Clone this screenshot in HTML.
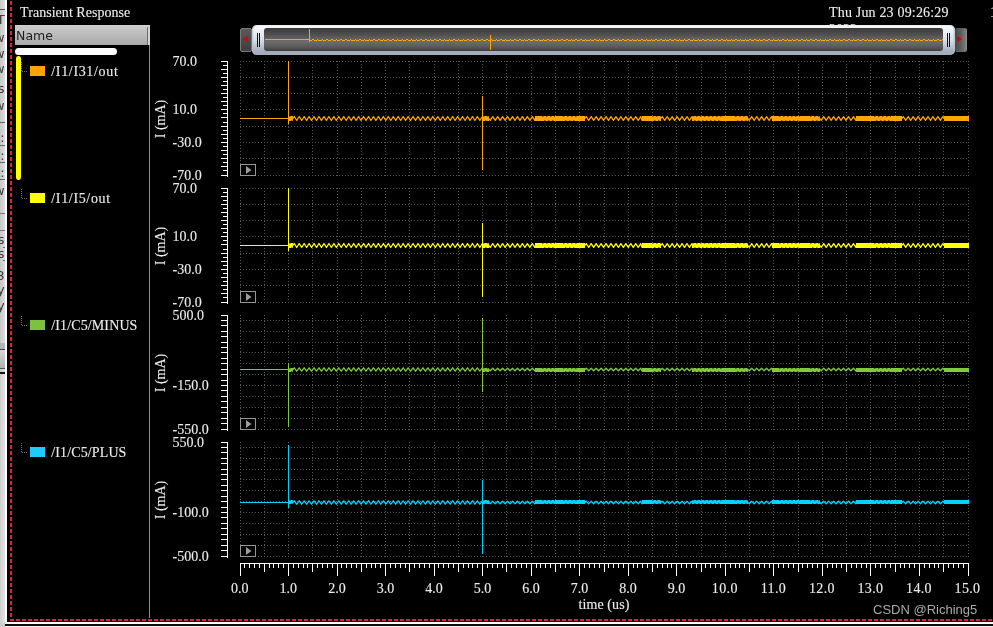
<!DOCTYPE html>
<html lang="en">
<head>
<meta charset="utf-8">
<title>Transient Response</title>
<style>
html,body{margin:0;padding:0;}
body{width:993px;height:627px;background:#000;position:relative;overflow:hidden;
 font-family:"Liberation Serif","DejaVu Serif",serif;font-size:14px;color:#ececec;-webkit-text-stroke:0.12px #ececec;}
div,span{position:absolute;white-space:nowrap;line-height:16px;}
#strip{left:0;top:0;width:4.8px;height:623px;background:linear-gradient(90deg,#c8c8c8,#dcdcdc);overflow:hidden;}
#stripw{left:4.8px;top:0;width:2.4px;height:622px;background:#fff;}
#strip span{-webkit-text-stroke:0;font-family:"DejaVu Sans","Liberation Sans",sans-serif;font-size:13px;color:#3c3c3c;right:0.2px;}
#strip i{position:absolute;left:0;width:5px;display:block;}
#bot1{left:4.6px;top:622px;width:990px;height:2.35px;background:#fff;}
#bot2{left:4.6px;top:624.35px;width:990px;height:1.5px;background:#0c0c0c;}
#bot3{left:4.6px;top:625.85px;width:990px;height:2px;background:#f6f6f6;}
#bot0{left:0;top:623px;width:4.8px;height:4px;background:#cbcbcb;}
#title{left:20.1px;top:5px;letter-spacing:0.04px;}
#date{left:829px;top:5px;letter-spacing:0.18px;}
#year{left:829px;top:22px;}
#one{left:989.9px;top:5px;}
#hdr{left:15px;top:25px;width:135px;height:20px;background:linear-gradient(#d4d4d4 0,#cbcbcb 6%,#a9a9a9 100%);}
#hdr b{position:absolute;left:132px;top:2px;width:1px;height:18px;background:#6e6e6e;}
#hdr u{position:absolute;left:133px;top:1px;width:2px;height:19px;background:#d2d2d2;}
#name{-webkit-text-stroke:0;left:16.1px;top:27.8px;transform:scaleY(0.92);transform-origin:0 12.5px;font-family:"DejaVu Sans","Liberation Sans",sans-serif;font-size:12.5px;color:#1e1e1e;line-height:16px;}
#pb{left:149px;top:45px;width:1px;height:573px;background:#8e8e8e;}
#wbar{left:15px;top:48px;width:102px;height:7px;border-radius:3.5px;background:#fff;}
#ybar{left:16.1px;top:56px;width:4.6px;height:124.4px;border-radius:2.3px / 3.2px;background:#ffff00;}
.sw{left:30px;width:15px;height:10px;}
.lg{left:51.3px;}
.yl{left:172.6px;}
.xl{width:40px;text-align:center;top:580.8px;margin-left:-0.7px;}
.ima{left:141px;width:40px;text-align:center;transform:rotate(-90deg);margin-top:-8px;}
#tl{left:574px;width:60px;text-align:center;top:596.5px;letter-spacing:0.1px;}
#wm{-webkit-text-stroke:0;left:873px;top:602px;font-family:"Liberation Sans","DejaVu Sans",sans-serif;font-size:13px;color:#a9a9a9;}
#sl{left:251.5px;top:25px;width:703.7px;height:30px;border-radius:5px;box-shadow:inset 1.5px 0 1.5px -0.5px #b9c1cd,inset -1.5px 0 1.5px -0.5px #b9c1cd;background:linear-gradient(#f8fafc 0,#f1f4f8 12%,#d9dfe7 50%,#a6b0be 86%,#a0aab8 100%);}
#sli{left:12.8px;top:3px;width:678.6px;height:23.3px;border-radius:3px;background:linear-gradient(#383838 0,#404040 8%,#4e4e4e 28%,#6d6d6d 58%,#5c5c5c 80%,#454545 96%,#363636 100%);}
.btn{top:28px;width:11.8px;height:23.9px;box-sizing:border-box;border:1px solid #7a7a7a;border-radius:2px;background:linear-gradient(#5a5a5a,#4c4c4c 45%,#3e3e3e);}
.grip{top:8px;width:1.1px;height:14px;background:#111;}
svg{position:absolute;left:0;top:0;}
#root{left:0;top:0;width:993px;height:627px;will-change:transform;}
</style>
</head>
<body>
<div id="root">
<div id="strip">
<i style="top:9px;height:1px;background:#555"></i>
<span style="top:12px">T</span><span style="top:29.5px">w</span><span style="top:45.5px">w</span><span style="top:60.5px">w</span><span style="top:80.5px">s</span><span style="top:97.5px">w</span>
<i style="top:122px;height:1px;background:#666"></i>
<span style="top:129.5px">:</span>
<i style="top:145px;height:1px;background:#666"></i>
<span style="top:147.5px">:</span>
<i style="top:162px;height:1px;background:#666"></i>
<span style="top:164.5px">:</span>
<i style="top:179px;height:1px;background:#666"></i>
<span style="top:182.5px">w</span>
<i style="top:213px;height:1px;background:#777"></i>
<i style="top:230px;height:1px;background:#777"></i>
<span style="top:231.5px">s</span>
<i style="top:247px;left:2.5px;height:1px;background:#666"></i>
<span style="top:245.5px">s</span>
<i style="top:260px;left:2.5px;height:1px;background:#666"></i>
<span style="top:267.5px">8</span><span style="top:282px">y</span><span style="top:298px">y</span>
<i style="top:343px;height:7px;background:#b4b4bc"></i>
<i style="top:349px;height:1px;background:#444"></i>
<i style="top:350px;height:18px;background:linear-gradient(#d8d8d8,#b0b0b0)"></i>
<i style="top:368px;height:1px;background:#555"></i>
<i style="top:372px;height:2px;background:#111"></i>
<i style="top:374px;height:249px;background:linear-gradient(90deg,#cfcfcf,#e2e2e2)"></i>
</div>
<div id="stripw"></div>
<div id="bot0"></div><div id="bot1"></div><div id="bot2"></div><div id="bot3"></div>

<div id="title">Transient Response</div>
<div id="date">Thu Jun 23 09:26:29</div>
<div id="year">2022</div>
<div id="one">1</div>

<div id="hdr"><b></b><u></u></div>
<div id="name">Name</div>
<div id="pb"></div>
<div id="wbar"></div>
<div id="ybar"></div>

<div class="sw" style="top:66px;background:#ffa500"></div>
<div class="lg" style="top:63.7px;letter-spacing:0.66px">/I1/I31/out</div>
<div class="sw" style="top:193px;background:#ffff00"></div>
<div class="lg" style="top:190.7px;letter-spacing:0.66px">/I1/I5/out</div>
<div class="sw" style="top:320px;background:#7dc13f"></div>
<div class="lg" style="top:317.7px;letter-spacing:0.12px">/I1/C5/MINUS</div>
<div class="sw" style="top:447px;background:#1ecbff"></div>
<div class="lg" style="top:444.7px;letter-spacing:0.12px">/I1/C5/PLUS</div>

<svg width="993" height="627" viewBox="0 0 993 627">
<!-- red dashed selection frame -->
<g shape-rendering="crispEdges" stroke="#e8193f" stroke-width="2" fill="none">
<line x1="11" y1="1" x2="11" y2="621" stroke-dasharray="4 2"/>
<line x1="10" y1="620" x2="993" y2="620" stroke-dasharray="4 2"/>
</g>
<!-- tree connectors -->
<g shape-rendering="crispEdges" stroke="#707070" stroke-width="1" stroke-dasharray="1 1" fill="none">
<path d="M21.5 62V71M22 71.5H28"/>
<path d="M21.5 189V198M22 198.5H28"/>
<path d="M21.5 316V325M22 325.5H28"/>
<path d="M21.5 443V452M22 452.5H28"/>
</g>
<g shape-rendering="crispEdges" stroke="#575b60" stroke-width="1" stroke-dasharray="1 2">
<line x1="240.5" y1="61" x2="240.5" y2="176"/>
<line x1="264.5" y1="61" x2="264.5" y2="176"/>
<line x1="288.5" y1="61" x2="288.5" y2="176"/>
<line x1="312.5" y1="61" x2="312.5" y2="176"/>
<line x1="337.5" y1="61" x2="337.5" y2="176"/>
<line x1="361.5" y1="61" x2="361.5" y2="176"/>
<line x1="385.5" y1="61" x2="385.5" y2="176"/>
<line x1="409.5" y1="61" x2="409.5" y2="176"/>
<line x1="434.5" y1="61" x2="434.5" y2="176"/>
<line x1="458.5" y1="61" x2="458.5" y2="176"/>
<line x1="482.5" y1="61" x2="482.5" y2="176"/>
<line x1="506.5" y1="61" x2="506.5" y2="176"/>
<line x1="531.5" y1="61" x2="531.5" y2="176"/>
<line x1="555.5" y1="61" x2="555.5" y2="176"/>
<line x1="579.5" y1="61" x2="579.5" y2="176"/>
<line x1="604.5" y1="61" x2="604.5" y2="176"/>
<line x1="628.5" y1="61" x2="628.5" y2="176"/>
<line x1="652.5" y1="61" x2="652.5" y2="176"/>
<line x1="676.5" y1="61" x2="676.5" y2="176"/>
<line x1="701.5" y1="61" x2="701.5" y2="176"/>
<line x1="725.5" y1="61" x2="725.5" y2="176"/>
<line x1="749.5" y1="61" x2="749.5" y2="176"/>
<line x1="773.5" y1="61" x2="773.5" y2="176"/>
<line x1="798.5" y1="61" x2="798.5" y2="176"/>
<line x1="822.5" y1="61" x2="822.5" y2="176"/>
<line x1="846.5" y1="61" x2="846.5" y2="176"/>
<line x1="870.5" y1="61" x2="870.5" y2="176"/>
<line x1="895.5" y1="61" x2="895.5" y2="176"/>
<line x1="919.5" y1="61" x2="919.5" y2="176"/>
<line x1="943.5" y1="61" x2="943.5" y2="176"/>
<line x1="968.5" y1="61" x2="968.5" y2="176"/>
<line x1="240" y1="61.5" x2="969" y2="61.5"/>
<line x1="240" y1="77.5" x2="969" y2="77.5"/>
<line x1="240" y1="93.5" x2="969" y2="93.5"/>
<line x1="240" y1="109.5" x2="969" y2="109.5"/>
<line x1="240" y1="126.5" x2="969" y2="126.5"/>
<line x1="240" y1="142.5" x2="969" y2="142.5"/>
<line x1="240" y1="158.5" x2="969" y2="158.5"/>
<line x1="240" y1="175.5" x2="969" y2="175.5"/>
</g>
<g shape-rendering="crispEdges" stroke="#575b60" stroke-width="1" stroke-dasharray="1 2">
<line x1="240.5" y1="188" x2="240.5" y2="303"/>
<line x1="264.5" y1="188" x2="264.5" y2="303"/>
<line x1="288.5" y1="188" x2="288.5" y2="303"/>
<line x1="312.5" y1="188" x2="312.5" y2="303"/>
<line x1="337.5" y1="188" x2="337.5" y2="303"/>
<line x1="361.5" y1="188" x2="361.5" y2="303"/>
<line x1="385.5" y1="188" x2="385.5" y2="303"/>
<line x1="409.5" y1="188" x2="409.5" y2="303"/>
<line x1="434.5" y1="188" x2="434.5" y2="303"/>
<line x1="458.5" y1="188" x2="458.5" y2="303"/>
<line x1="482.5" y1="188" x2="482.5" y2="303"/>
<line x1="506.5" y1="188" x2="506.5" y2="303"/>
<line x1="531.5" y1="188" x2="531.5" y2="303"/>
<line x1="555.5" y1="188" x2="555.5" y2="303"/>
<line x1="579.5" y1="188" x2="579.5" y2="303"/>
<line x1="604.5" y1="188" x2="604.5" y2="303"/>
<line x1="628.5" y1="188" x2="628.5" y2="303"/>
<line x1="652.5" y1="188" x2="652.5" y2="303"/>
<line x1="676.5" y1="188" x2="676.5" y2="303"/>
<line x1="701.5" y1="188" x2="701.5" y2="303"/>
<line x1="725.5" y1="188" x2="725.5" y2="303"/>
<line x1="749.5" y1="188" x2="749.5" y2="303"/>
<line x1="773.5" y1="188" x2="773.5" y2="303"/>
<line x1="798.5" y1="188" x2="798.5" y2="303"/>
<line x1="822.5" y1="188" x2="822.5" y2="303"/>
<line x1="846.5" y1="188" x2="846.5" y2="303"/>
<line x1="870.5" y1="188" x2="870.5" y2="303"/>
<line x1="895.5" y1="188" x2="895.5" y2="303"/>
<line x1="919.5" y1="188" x2="919.5" y2="303"/>
<line x1="943.5" y1="188" x2="943.5" y2="303"/>
<line x1="968.5" y1="188" x2="968.5" y2="303"/>
<line x1="240" y1="188.5" x2="969" y2="188.5"/>
<line x1="240" y1="204.5" x2="969" y2="204.5"/>
<line x1="240" y1="220.5" x2="969" y2="220.5"/>
<line x1="240" y1="236.5" x2="969" y2="236.5"/>
<line x1="240" y1="253.5" x2="969" y2="253.5"/>
<line x1="240" y1="269.5" x2="969" y2="269.5"/>
<line x1="240" y1="285.5" x2="969" y2="285.5"/>
<line x1="240" y1="302.5" x2="969" y2="302.5"/>
</g>
<g shape-rendering="crispEdges" stroke="#575b60" stroke-width="1" stroke-dasharray="1 2">
<line x1="240.5" y1="315" x2="240.5" y2="430"/>
<line x1="264.5" y1="315" x2="264.5" y2="430"/>
<line x1="288.5" y1="315" x2="288.5" y2="430"/>
<line x1="312.5" y1="315" x2="312.5" y2="430"/>
<line x1="337.5" y1="315" x2="337.5" y2="430"/>
<line x1="361.5" y1="315" x2="361.5" y2="430"/>
<line x1="385.5" y1="315" x2="385.5" y2="430"/>
<line x1="409.5" y1="315" x2="409.5" y2="430"/>
<line x1="434.5" y1="315" x2="434.5" y2="430"/>
<line x1="458.5" y1="315" x2="458.5" y2="430"/>
<line x1="482.5" y1="315" x2="482.5" y2="430"/>
<line x1="506.5" y1="315" x2="506.5" y2="430"/>
<line x1="531.5" y1="315" x2="531.5" y2="430"/>
<line x1="555.5" y1="315" x2="555.5" y2="430"/>
<line x1="579.5" y1="315" x2="579.5" y2="430"/>
<line x1="604.5" y1="315" x2="604.5" y2="430"/>
<line x1="628.5" y1="315" x2="628.5" y2="430"/>
<line x1="652.5" y1="315" x2="652.5" y2="430"/>
<line x1="676.5" y1="315" x2="676.5" y2="430"/>
<line x1="701.5" y1="315" x2="701.5" y2="430"/>
<line x1="725.5" y1="315" x2="725.5" y2="430"/>
<line x1="749.5" y1="315" x2="749.5" y2="430"/>
<line x1="773.5" y1="315" x2="773.5" y2="430"/>
<line x1="798.5" y1="315" x2="798.5" y2="430"/>
<line x1="822.5" y1="315" x2="822.5" y2="430"/>
<line x1="846.5" y1="315" x2="846.5" y2="430"/>
<line x1="870.5" y1="315" x2="870.5" y2="430"/>
<line x1="895.5" y1="315" x2="895.5" y2="430"/>
<line x1="919.5" y1="315" x2="919.5" y2="430"/>
<line x1="943.5" y1="315" x2="943.5" y2="430"/>
<line x1="968.5" y1="315" x2="968.5" y2="430"/>
<line x1="240" y1="320.5" x2="969" y2="320.5"/>
<line x1="240" y1="331.5" x2="969" y2="331.5"/>
<line x1="240" y1="342.5" x2="969" y2="342.5"/>
<line x1="240" y1="352.5" x2="969" y2="352.5"/>
<line x1="240" y1="363.5" x2="969" y2="363.5"/>
<line x1="240" y1="374.5" x2="969" y2="374.5"/>
<line x1="240" y1="385.5" x2="969" y2="385.5"/>
<line x1="240" y1="396.5" x2="969" y2="396.5"/>
<line x1="240" y1="407.5" x2="969" y2="407.5"/>
<line x1="240" y1="418.5" x2="969" y2="418.5"/>
<line x1="240" y1="429.5" x2="969" y2="429.5"/>
</g>
<g shape-rendering="crispEdges" stroke="#575b60" stroke-width="1" stroke-dasharray="1 2">
<line x1="240.5" y1="442" x2="240.5" y2="557"/>
<line x1="264.5" y1="442" x2="264.5" y2="557"/>
<line x1="288.5" y1="442" x2="288.5" y2="557"/>
<line x1="312.5" y1="442" x2="312.5" y2="557"/>
<line x1="337.5" y1="442" x2="337.5" y2="557"/>
<line x1="361.5" y1="442" x2="361.5" y2="557"/>
<line x1="385.5" y1="442" x2="385.5" y2="557"/>
<line x1="409.5" y1="442" x2="409.5" y2="557"/>
<line x1="434.5" y1="442" x2="434.5" y2="557"/>
<line x1="458.5" y1="442" x2="458.5" y2="557"/>
<line x1="482.5" y1="442" x2="482.5" y2="557"/>
<line x1="506.5" y1="442" x2="506.5" y2="557"/>
<line x1="531.5" y1="442" x2="531.5" y2="557"/>
<line x1="555.5" y1="442" x2="555.5" y2="557"/>
<line x1="579.5" y1="442" x2="579.5" y2="557"/>
<line x1="604.5" y1="442" x2="604.5" y2="557"/>
<line x1="628.5" y1="442" x2="628.5" y2="557"/>
<line x1="652.5" y1="442" x2="652.5" y2="557"/>
<line x1="676.5" y1="442" x2="676.5" y2="557"/>
<line x1="701.5" y1="442" x2="701.5" y2="557"/>
<line x1="725.5" y1="442" x2="725.5" y2="557"/>
<line x1="749.5" y1="442" x2="749.5" y2="557"/>
<line x1="773.5" y1="442" x2="773.5" y2="557"/>
<line x1="798.5" y1="442" x2="798.5" y2="557"/>
<line x1="822.5" y1="442" x2="822.5" y2="557"/>
<line x1="846.5" y1="442" x2="846.5" y2="557"/>
<line x1="870.5" y1="442" x2="870.5" y2="557"/>
<line x1="895.5" y1="442" x2="895.5" y2="557"/>
<line x1="919.5" y1="442" x2="919.5" y2="557"/>
<line x1="943.5" y1="442" x2="943.5" y2="557"/>
<line x1="968.5" y1="442" x2="968.5" y2="557"/>
<line x1="240" y1="447.5" x2="969" y2="447.5"/>
<line x1="240" y1="458.5" x2="969" y2="458.5"/>
<line x1="240" y1="469.5" x2="969" y2="469.5"/>
<line x1="240" y1="479.5" x2="969" y2="479.5"/>
<line x1="240" y1="490.5" x2="969" y2="490.5"/>
<line x1="240" y1="501.5" x2="969" y2="501.5"/>
<line x1="240" y1="512.5" x2="969" y2="512.5"/>
<line x1="240" y1="523.5" x2="969" y2="523.5"/>
<line x1="240" y1="534.5" x2="969" y2="534.5"/>
<line x1="240" y1="545.5" x2="969" y2="545.5"/>
<line x1="240" y1="556.5" x2="969" y2="556.5"/>
</g>
<g shape-rendering="crispEdges" fill="#fff">
<rect x="227" y="61" width="1" height="116"/>
<rect x="221" y="61" width="6" height="1"/>
<rect x="223" y="65" width="4" height="1"/>
<rect x="221" y="69" width="6" height="1"/>
<rect x="223" y="73" width="4" height="1"/>
<rect x="221" y="77" width="6" height="1"/>
<rect x="223" y="81" width="4" height="1"/>
<rect x="221" y="85" width="6" height="1"/>
<rect x="223" y="89" width="4" height="1"/>
<rect x="221" y="93" width="6" height="1"/>
<rect x="223" y="97" width="4" height="1"/>
<rect x="221" y="101" width="6" height="1"/>
<rect x="223" y="105" width="4" height="1"/>
<rect x="221" y="109" width="6" height="1"/>
<rect x="223" y="113" width="4" height="1"/>
<rect x="221" y="117" width="6" height="1"/>
<rect x="223" y="122" width="4" height="1"/>
<rect x="221" y="126" width="6" height="1"/>
<rect x="223" y="130" width="4" height="1"/>
<rect x="221" y="134" width="6" height="1"/>
<rect x="223" y="138" width="4" height="1"/>
<rect x="221" y="142" width="6" height="1"/>
<rect x="223" y="146" width="4" height="1"/>
<rect x="221" y="150" width="6" height="1"/>
<rect x="223" y="154" width="4" height="1"/>
<rect x="221" y="158" width="6" height="1"/>
<rect x="223" y="162" width="4" height="1"/>
<rect x="221" y="166" width="6" height="1"/>
<rect x="223" y="170" width="4" height="1"/>
<rect x="221" y="175" width="6" height="1"/>
</g>
<g shape-rendering="crispEdges" fill="#fff">
<rect x="227" y="188" width="1" height="116"/>
<rect x="221" y="188" width="6" height="1"/>
<rect x="223" y="192" width="4" height="1"/>
<rect x="221" y="196" width="6" height="1"/>
<rect x="223" y="200" width="4" height="1"/>
<rect x="221" y="204" width="6" height="1"/>
<rect x="223" y="208" width="4" height="1"/>
<rect x="221" y="212" width="6" height="1"/>
<rect x="223" y="216" width="4" height="1"/>
<rect x="221" y="220" width="6" height="1"/>
<rect x="223" y="224" width="4" height="1"/>
<rect x="221" y="228" width="6" height="1"/>
<rect x="223" y="232" width="4" height="1"/>
<rect x="221" y="236" width="6" height="1"/>
<rect x="223" y="240" width="4" height="1"/>
<rect x="221" y="244" width="6" height="1"/>
<rect x="223" y="249" width="4" height="1"/>
<rect x="221" y="253" width="6" height="1"/>
<rect x="223" y="257" width="4" height="1"/>
<rect x="221" y="261" width="6" height="1"/>
<rect x="223" y="265" width="4" height="1"/>
<rect x="221" y="269" width="6" height="1"/>
<rect x="223" y="273" width="4" height="1"/>
<rect x="221" y="277" width="6" height="1"/>
<rect x="223" y="281" width="4" height="1"/>
<rect x="221" y="285" width="6" height="1"/>
<rect x="223" y="289" width="4" height="1"/>
<rect x="221" y="293" width="6" height="1"/>
<rect x="223" y="297" width="4" height="1"/>
<rect x="221" y="302" width="6" height="1"/>
</g>
<g shape-rendering="crispEdges" fill="#fff">
<rect x="227" y="315" width="1" height="116"/>
<rect x="221" y="315" width="6" height="1"/>
<rect x="221" y="320" width="6" height="1"/>
<rect x="221" y="325" width="6" height="1"/>
<rect x="221" y="331" width="6" height="1"/>
<rect x="221" y="336" width="6" height="1"/>
<rect x="221" y="342" width="6" height="1"/>
<rect x="221" y="347" width="6" height="1"/>
<rect x="221" y="352" width="6" height="1"/>
<rect x="221" y="358" width="6" height="1"/>
<rect x="221" y="363" width="6" height="1"/>
<rect x="221" y="369" width="6" height="1"/>
<rect x="221" y="374" width="6" height="1"/>
<rect x="221" y="380" width="6" height="1"/>
<rect x="221" y="385" width="6" height="1"/>
<rect x="221" y="390" width="6" height="1"/>
<rect x="221" y="396" width="6" height="1"/>
<rect x="221" y="401" width="6" height="1"/>
<rect x="221" y="407" width="6" height="1"/>
<rect x="221" y="412" width="6" height="1"/>
<rect x="221" y="418" width="6" height="1"/>
<rect x="221" y="423" width="6" height="1"/>
<rect x="221" y="429" width="6" height="1"/>
</g>
<g shape-rendering="crispEdges" fill="#fff">
<rect x="227" y="442" width="1" height="116"/>
<rect x="221" y="442" width="6" height="1"/>
<rect x="221" y="447" width="6" height="1"/>
<rect x="221" y="452" width="6" height="1"/>
<rect x="221" y="458" width="6" height="1"/>
<rect x="221" y="463" width="6" height="1"/>
<rect x="221" y="469" width="6" height="1"/>
<rect x="221" y="474" width="6" height="1"/>
<rect x="221" y="479" width="6" height="1"/>
<rect x="221" y="485" width="6" height="1"/>
<rect x="221" y="490" width="6" height="1"/>
<rect x="221" y="496" width="6" height="1"/>
<rect x="221" y="501" width="6" height="1"/>
<rect x="221" y="507" width="6" height="1"/>
<rect x="221" y="512" width="6" height="1"/>
<rect x="221" y="517" width="6" height="1"/>
<rect x="221" y="523" width="6" height="1"/>
<rect x="221" y="528" width="6" height="1"/>
<rect x="221" y="534" width="6" height="1"/>
<rect x="221" y="539" width="6" height="1"/>
<rect x="221" y="545" width="6" height="1"/>
<rect x="221" y="550" width="6" height="1"/>
<rect x="221" y="556" width="6" height="1"/>
</g>
<g shape-rendering="crispEdges" fill="#fff">
<rect x="240" y="563" width="729" height="1"/>
<rect x="240" y="563" width="1" height="13"/>
<rect x="244" y="563" width="1" height="5"/>
<rect x="249" y="563" width="1" height="5"/>
<rect x="254" y="563" width="1" height="5"/>
<rect x="259" y="563" width="1" height="5"/>
<rect x="264" y="563" width="1" height="9"/>
<rect x="269" y="563" width="1" height="5"/>
<rect x="273" y="563" width="1" height="5"/>
<rect x="278" y="563" width="1" height="5"/>
<rect x="283" y="563" width="1" height="5"/>
<rect x="288" y="563" width="1" height="13"/>
<rect x="293" y="563" width="1" height="5"/>
<rect x="298" y="563" width="1" height="5"/>
<rect x="303" y="563" width="1" height="5"/>
<rect x="307" y="563" width="1" height="5"/>
<rect x="312" y="563" width="1" height="9"/>
<rect x="317" y="563" width="1" height="5"/>
<rect x="322" y="563" width="1" height="5"/>
<rect x="327" y="563" width="1" height="5"/>
<rect x="332" y="563" width="1" height="5"/>
<rect x="337" y="563" width="1" height="13"/>
<rect x="341" y="563" width="1" height="5"/>
<rect x="346" y="563" width="1" height="5"/>
<rect x="351" y="563" width="1" height="5"/>
<rect x="356" y="563" width="1" height="5"/>
<rect x="361" y="563" width="1" height="9"/>
<rect x="366" y="563" width="1" height="5"/>
<rect x="371" y="563" width="1" height="5"/>
<rect x="375" y="563" width="1" height="5"/>
<rect x="380" y="563" width="1" height="5"/>
<rect x="385" y="563" width="1" height="13"/>
<rect x="390" y="563" width="1" height="5"/>
<rect x="395" y="563" width="1" height="5"/>
<rect x="400" y="563" width="1" height="5"/>
<rect x="405" y="563" width="1" height="5"/>
<rect x="409" y="563" width="1" height="9"/>
<rect x="414" y="563" width="1" height="5"/>
<rect x="419" y="563" width="1" height="5"/>
<rect x="424" y="563" width="1" height="5"/>
<rect x="429" y="563" width="1" height="5"/>
<rect x="434" y="563" width="1" height="13"/>
<rect x="438" y="563" width="1" height="5"/>
<rect x="443" y="563" width="1" height="5"/>
<rect x="448" y="563" width="1" height="5"/>
<rect x="453" y="563" width="1" height="5"/>
<rect x="458" y="563" width="1" height="9"/>
<rect x="463" y="563" width="1" height="5"/>
<rect x="468" y="563" width="1" height="5"/>
<rect x="472" y="563" width="1" height="5"/>
<rect x="477" y="563" width="1" height="5"/>
<rect x="482" y="563" width="1" height="13"/>
<rect x="487" y="563" width="1" height="5"/>
<rect x="492" y="563" width="1" height="5"/>
<rect x="497" y="563" width="1" height="5"/>
<rect x="502" y="563" width="1" height="5"/>
<rect x="506" y="563" width="1" height="9"/>
<rect x="511" y="563" width="1" height="5"/>
<rect x="516" y="563" width="1" height="5"/>
<rect x="521" y="563" width="1" height="5"/>
<rect x="526" y="563" width="1" height="5"/>
<rect x="531" y="563" width="1" height="13"/>
<rect x="536" y="563" width="1" height="5"/>
<rect x="540" y="563" width="1" height="5"/>
<rect x="545" y="563" width="1" height="5"/>
<rect x="550" y="563" width="1" height="5"/>
<rect x="555" y="563" width="1" height="9"/>
<rect x="560" y="563" width="1" height="5"/>
<rect x="565" y="563" width="1" height="5"/>
<rect x="570" y="563" width="1" height="5"/>
<rect x="574" y="563" width="1" height="5"/>
<rect x="579" y="563" width="1" height="13"/>
<rect x="584" y="563" width="1" height="5"/>
<rect x="589" y="563" width="1" height="5"/>
<rect x="594" y="563" width="1" height="5"/>
<rect x="599" y="563" width="1" height="5"/>
<rect x="604" y="563" width="1" height="9"/>
<rect x="608" y="563" width="1" height="5"/>
<rect x="613" y="563" width="1" height="5"/>
<rect x="618" y="563" width="1" height="5"/>
<rect x="623" y="563" width="1" height="5"/>
<rect x="628" y="563" width="1" height="13"/>
<rect x="633" y="563" width="1" height="5"/>
<rect x="637" y="563" width="1" height="5"/>
<rect x="642" y="563" width="1" height="5"/>
<rect x="647" y="563" width="1" height="5"/>
<rect x="652" y="563" width="1" height="9"/>
<rect x="657" y="563" width="1" height="5"/>
<rect x="662" y="563" width="1" height="5"/>
<rect x="667" y="563" width="1" height="5"/>
<rect x="671" y="563" width="1" height="5"/>
<rect x="676" y="563" width="1" height="13"/>
<rect x="681" y="563" width="1" height="5"/>
<rect x="686" y="563" width="1" height="5"/>
<rect x="691" y="563" width="1" height="5"/>
<rect x="696" y="563" width="1" height="5"/>
<rect x="701" y="563" width="1" height="9"/>
<rect x="705" y="563" width="1" height="5"/>
<rect x="710" y="563" width="1" height="5"/>
<rect x="715" y="563" width="1" height="5"/>
<rect x="720" y="563" width="1" height="5"/>
<rect x="725" y="563" width="1" height="13"/>
<rect x="730" y="563" width="1" height="5"/>
<rect x="735" y="563" width="1" height="5"/>
<rect x="739" y="563" width="1" height="5"/>
<rect x="744" y="563" width="1" height="5"/>
<rect x="749" y="563" width="1" height="9"/>
<rect x="754" y="563" width="1" height="5"/>
<rect x="759" y="563" width="1" height="5"/>
<rect x="764" y="563" width="1" height="5"/>
<rect x="769" y="563" width="1" height="5"/>
<rect x="773" y="563" width="1" height="13"/>
<rect x="778" y="563" width="1" height="5"/>
<rect x="783" y="563" width="1" height="5"/>
<rect x="788" y="563" width="1" height="5"/>
<rect x="793" y="563" width="1" height="5"/>
<rect x="798" y="563" width="1" height="9"/>
<rect x="802" y="563" width="1" height="5"/>
<rect x="807" y="563" width="1" height="5"/>
<rect x="812" y="563" width="1" height="5"/>
<rect x="817" y="563" width="1" height="5"/>
<rect x="822" y="563" width="1" height="13"/>
<rect x="827" y="563" width="1" height="5"/>
<rect x="832" y="563" width="1" height="5"/>
<rect x="836" y="563" width="1" height="5"/>
<rect x="841" y="563" width="1" height="5"/>
<rect x="846" y="563" width="1" height="9"/>
<rect x="851" y="563" width="1" height="5"/>
<rect x="856" y="563" width="1" height="5"/>
<rect x="861" y="563" width="1" height="5"/>
<rect x="866" y="563" width="1" height="5"/>
<rect x="870" y="563" width="1" height="13"/>
<rect x="875" y="563" width="1" height="5"/>
<rect x="880" y="563" width="1" height="5"/>
<rect x="885" y="563" width="1" height="5"/>
<rect x="890" y="563" width="1" height="5"/>
<rect x="895" y="563" width="1" height="9"/>
<rect x="900" y="563" width="1" height="5"/>
<rect x="904" y="563" width="1" height="5"/>
<rect x="909" y="563" width="1" height="5"/>
<rect x="914" y="563" width="1" height="5"/>
<rect x="919" y="563" width="1" height="13"/>
<rect x="924" y="563" width="1" height="5"/>
<rect x="929" y="563" width="1" height="5"/>
<rect x="934" y="563" width="1" height="5"/>
<rect x="938" y="563" width="1" height="5"/>
<rect x="943" y="563" width="1" height="9"/>
<rect x="948" y="563" width="1" height="5"/>
<rect x="953" y="563" width="1" height="5"/>
<rect x="958" y="563" width="1" height="5"/>
<rect x="963" y="563" width="1" height="5"/>
<rect x="968" y="563" width="1" height="13"/>
</g>
<g shape-rendering="crispEdges" fill="#ffa500">
<rect x="240" y="118" width="49" height="1"/>
<rect x="288" y="61" width="1" height="63"/>
<rect x="482" y="96" width="1" height="74"/>
<rect x="535" y="116.0" width="7" height="5.0"/>
<rect x="555" y="116.0" width="8" height="5.0"/>
<rect x="577" y="116.0" width="8" height="5.0"/>
<rect x="642" y="116.0" width="10" height="5.0"/>
<rect x="722" y="116.0" width="13" height="5.0"/>
<rect x="772" y="116.0" width="7" height="5.0"/>
<rect x="800" y="116.0" width="10" height="5.0"/>
<rect x="856" y="116.0" width="18" height="5.0"/>
<rect x="891" y="116.0" width="11" height="5.0"/>
<rect x="944" y="116.0" width="25" height="5.0"/>
</g>
<path d="M289.00 116.00 L289.30 116.00 L289.90 117.30 L290.50 116.00 L291.00 116.00 L291.00 116.00 L293.00 116.00 L293.00 121.00 L292.50 121.00 L291.90 119.70 L291.30 121.00 L291.00 121.00 L291.00 121.00 L289.00 121.00Z" fill="#ffa500"/>
<path d="M293.00 118.50 L294.24 116.50 L296.71 120.50 L299.19 116.50 L301.66 120.50 L304.14 116.50 L306.61 120.50 L309.09 116.50 L311.56 120.50 L314.04 116.50 L316.51 120.50 L318.99 116.50 L321.46 120.50 L323.94 116.50 L326.41 120.50 L328.89 116.50 L331.36 120.50 L333.84 116.50 L336.31 120.50 L338.79 116.50 L341.26 120.50 L343.74 116.50 L346.21 120.50 L348.69 116.50 L351.16 120.50 L353.64 116.50 L356.11 120.50 L358.59 116.50 L361.06 120.50 L363.54 116.50 L366.01 120.50 L368.49 116.50 L370.96 120.50 L373.44 116.50 L375.91 120.50 L378.39 116.50 L380.86 120.50 L383.34 116.50 L385.81 120.50 L388.29 116.50 L390.76 120.50 L393.24 116.50 L395.71 120.50 L398.19 116.50 L400.66 120.50 L403.14 116.50 L405.61 120.50 L408.09 116.50 L410.56 120.50 L413.04 116.50 L415.51 120.50 L417.99 116.50 L420.46 120.50 L422.94 116.50 L425.41 120.50 L427.89 116.50 L430.36 120.50 L432.84 116.50 L435.31 120.50 L437.79 116.50 L440.26 120.50 L442.74 116.50 L445.21 120.50 L447.69 116.50 L450.16 120.50 L452.64 116.50 L455.11 120.50 L457.59 116.50 L460.06 120.50 L462.54 116.50 L465.01 120.50 L467.49 116.50 L469.96 120.50 L472.44 116.50 L474.91 120.50 L477.39 116.50 L479.86 120.50 L482.34 116.50 L483.00 118.50" fill="none" stroke="#ffa500" stroke-width="1.3" stroke-linejoin="round"/>
<path d="M483.00 116.00 L483.30 116.00 L483.90 117.30 L484.50 116.00 L485.00 116.00 L485.00 116.00 L487.00 116.00 L487.00 116.00 L487.30 116.00 L487.90 117.30 L488.50 116.00 L489.00 116.00 L489.00 121.00 L487.00 121.00 L487.00 121.00 L486.50 121.00 L485.90 119.70 L485.30 121.00 L485.00 121.00 L485.00 121.00 L483.00 121.00Z" fill="#ffa500"/>
<path d="M489.00 118.50 L490.24 120.35 L492.71 116.65 L495.19 120.35 L497.66 116.65 L500.14 120.35 L502.61 116.65 L505.09 120.35 L507.56 116.65 L510.04 120.35 L512.51 116.65 L514.99 120.35 L517.46 116.65 L519.94 120.35 L522.41 116.65 L524.89 120.35 L527.36 116.65 L529.84 120.35 L532.31 116.65 L534.79 120.35 L535.00 118.50" fill="none" stroke="#ffa500" stroke-width="1.3" stroke-linejoin="round"/>
<path d="M542.00 116.00 L542.30 116.00 L542.90 117.30 L543.50 116.00 L544.00 116.00 L544.00 116.00 L546.00 116.00 L546.00 116.00 L546.30 116.00 L546.90 117.30 L547.50 116.00 L548.00 116.00 L548.00 116.00 L550.00 116.00 L550.00 116.00 L550.30 116.00 L550.90 117.30 L551.50 116.00 L552.00 116.00 L552.00 116.00 L554.00 116.00 L554.00 116.00 L554.30 116.00 L554.90 117.30 L555.00 116.00 L555.00 116.00 L555.00 121.00 L554.00 121.00 L554.00 121.00 L553.50 121.00 L552.90 119.70 L552.30 121.00 L552.00 121.00 L552.00 121.00 L550.00 121.00 L550.00 121.00 L549.50 121.00 L548.90 119.70 L548.30 121.00 L548.00 121.00 L548.00 121.00 L546.00 121.00 L546.00 121.00 L545.50 121.00 L544.90 119.70 L544.30 121.00 L544.00 121.00 L544.00 121.00 L542.00 121.00Z" fill="#ffa500"/>
<path d="M563.00 116.00 L563.30 116.00 L563.90 117.30 L564.50 116.00 L565.00 116.00 L565.00 116.00 L567.00 116.00 L567.00 116.00 L567.30 116.00 L567.90 117.30 L568.50 116.00 L569.00 116.00 L569.00 116.00 L571.00 116.00 L571.00 116.00 L571.30 116.00 L571.90 117.30 L572.50 116.00 L573.00 116.00 L573.00 116.00 L575.00 116.00 L575.00 116.00 L575.30 116.00 L575.90 117.30 L576.50 116.00 L577.00 116.00 L577.00 121.00 L575.00 121.00 L575.00 121.00 L574.50 121.00 L573.90 119.70 L573.30 121.00 L573.00 121.00 L573.00 121.00 L571.00 121.00 L571.00 121.00 L570.50 121.00 L569.90 119.70 L569.30 121.00 L569.00 121.00 L569.00 121.00 L567.00 121.00 L567.00 121.00 L566.50 121.00 L565.90 119.70 L565.30 121.00 L565.00 121.00 L565.00 121.00 L563.00 121.00Z" fill="#ffa500"/>
<path d="M585.00 118.50 L586.24 116.65 L588.71 120.35 L591.19 116.65 L593.66 120.35 L596.14 116.65 L598.61 120.35 L601.09 116.65 L603.56 120.35 L606.04 116.65 L608.51 120.35 L610.99 116.65 L613.46 120.35 L615.94 116.65 L618.41 120.35 L620.89 116.65 L623.36 120.35 L625.84 116.65 L628.31 120.35 L630.79 116.65 L633.26 120.35 L635.74 116.65 L638.21 120.35 L640.69 116.65 L642.00 120.35 L642.00 118.50" fill="none" stroke="#ffa500" stroke-width="1.3" stroke-linejoin="round"/>
<path d="M652.00 116.00 L652.30 116.00 L652.90 117.30 L653.50 116.00 L654.00 116.00 L654.00 116.00 L656.00 116.00 L656.00 116.00 L656.30 116.00 L656.90 117.30 L657.50 116.00 L658.00 116.00 L658.00 116.00 L660.00 116.00 L660.00 116.00 L660.30 116.00 L660.90 117.30 L661.00 116.00 L661.00 116.00 L661.00 121.00 L660.00 121.00 L660.00 121.00 L659.50 121.00 L658.90 119.70 L658.30 121.00 L658.00 121.00 L658.00 121.00 L656.00 121.00 L656.00 121.00 L655.50 121.00 L654.90 119.70 L654.30 121.00 L654.00 121.00 L654.00 121.00 L652.00 121.00Z" fill="#ffa500"/>
<path d="M661.00 118.50 L662.24 116.65 L664.71 120.35 L667.19 116.65 L669.66 120.35 L672.14 116.65 L674.61 120.35 L677.09 116.65 L679.56 120.35 L682.04 116.65 L684.51 120.35 L686.99 116.65 L689.46 120.35 L691.94 116.65 L692.00 118.50" fill="none" stroke="#ffa500" stroke-width="1.3" stroke-linejoin="round"/>
<path d="M692.00 116.00 L692.30 116.00 L692.90 117.30 L693.50 116.00 L694.00 116.00 L694.00 116.00 L696.00 116.00 L696.00 116.00 L696.30 116.00 L696.90 117.30 L697.50 116.00 L698.00 116.00 L698.00 116.00 L700.00 116.00 L700.00 116.00 L700.30 116.00 L700.90 117.30 L701.50 116.00 L702.00 116.00 L702.00 116.00 L704.00 116.00 L704.00 116.00 L704.30 116.00 L704.90 117.30 L705.50 116.00 L706.00 116.00 L706.00 116.00 L708.00 116.00 L708.00 116.00 L708.30 116.00 L708.90 117.30 L709.50 116.00 L710.00 116.00 L710.00 116.00 L712.00 116.00 L712.00 116.00 L712.30 116.00 L712.90 117.30 L713.50 116.00 L714.00 116.00 L714.00 116.00 L716.00 116.00 L716.00 116.00 L716.30 116.00 L716.90 117.30 L717.50 116.00 L718.00 116.00 L718.00 116.00 L720.00 116.00 L720.00 116.00 L720.30 116.00 L720.90 117.30 L721.50 116.00 L722.00 116.00 L722.00 121.00 L720.00 121.00 L720.00 121.00 L719.50 121.00 L718.90 119.70 L718.30 121.00 L718.00 121.00 L718.00 121.00 L716.00 121.00 L716.00 121.00 L715.50 121.00 L714.90 119.70 L714.30 121.00 L714.00 121.00 L714.00 121.00 L712.00 121.00 L712.00 121.00 L711.50 121.00 L710.90 119.70 L710.30 121.00 L710.00 121.00 L710.00 121.00 L708.00 121.00 L708.00 121.00 L707.50 121.00 L706.90 119.70 L706.30 121.00 L706.00 121.00 L706.00 121.00 L704.00 121.00 L704.00 121.00 L703.50 121.00 L702.90 119.70 L702.30 121.00 L702.00 121.00 L702.00 121.00 L700.00 121.00 L700.00 121.00 L699.50 121.00 L698.90 119.70 L698.30 121.00 L698.00 121.00 L698.00 121.00 L696.00 121.00 L696.00 121.00 L695.50 121.00 L694.90 119.70 L694.30 121.00 L694.00 121.00 L694.00 121.00 L692.00 121.00Z" fill="#ffa500"/>
<path d="M735.00 116.00 L735.30 116.00 L735.90 117.30 L736.50 116.00 L737.00 116.00 L737.00 116.00 L739.00 116.00 L739.00 116.00 L739.30 116.00 L739.90 117.30 L740.50 116.00 L741.00 116.00 L741.00 116.00 L743.00 116.00 L743.00 116.00 L743.30 116.00 L743.90 117.30 L744.50 116.00 L745.00 116.00 L745.00 116.00 L747.00 116.00 L747.00 116.00 L747.30 116.00 L747.90 117.30 L748.00 116.00 L748.00 116.00 L748.00 121.00 L747.00 121.00 L747.00 121.00 L746.50 121.00 L745.90 119.70 L745.30 121.00 L745.00 121.00 L745.00 121.00 L743.00 121.00 L743.00 121.00 L742.50 121.00 L741.90 119.70 L741.30 121.00 L741.00 121.00 L741.00 121.00 L739.00 121.00 L739.00 121.00 L738.50 121.00 L737.90 119.70 L737.30 121.00 L737.00 121.00 L737.00 121.00 L735.00 121.00Z" fill="#ffa500"/>
<path d="M748.00 118.50 L749.24 120.35 L751.71 116.65 L754.19 120.35 L756.66 116.65 L759.14 120.35 L761.61 116.65 L764.09 120.35 L766.56 116.65 L769.04 120.35 L771.51 116.65 L772.00 118.50" fill="none" stroke="#ffa500" stroke-width="1.3" stroke-linejoin="round"/>
<path d="M779.00 116.00 L779.30 116.00 L779.90 117.30 L780.50 116.00 L781.00 116.00 L781.00 116.00 L783.00 116.00 L783.00 116.00 L783.30 116.00 L783.90 117.30 L784.50 116.00 L785.00 116.00 L785.00 116.00 L787.00 116.00 L787.00 116.00 L787.30 116.00 L787.90 117.30 L788.50 116.00 L789.00 116.00 L789.00 116.00 L791.00 116.00 L791.00 116.00 L791.30 116.00 L791.90 117.30 L792.50 116.00 L793.00 116.00 L793.00 116.00 L795.00 116.00 L795.00 116.00 L795.30 116.00 L795.90 117.30 L796.50 116.00 L797.00 116.00 L797.00 116.00 L799.00 116.00 L799.00 116.00 L799.30 116.00 L799.90 117.30 L800.00 116.00 L800.00 116.00 L800.00 121.00 L799.00 121.00 L799.00 121.00 L798.50 121.00 L797.90 119.70 L797.30 121.00 L797.00 121.00 L797.00 121.00 L795.00 121.00 L795.00 121.00 L794.50 121.00 L793.90 119.70 L793.30 121.00 L793.00 121.00 L793.00 121.00 L791.00 121.00 L791.00 121.00 L790.50 121.00 L789.90 119.70 L789.30 121.00 L789.00 121.00 L789.00 121.00 L787.00 121.00 L787.00 121.00 L786.50 121.00 L785.90 119.70 L785.30 121.00 L785.00 121.00 L785.00 121.00 L783.00 121.00 L783.00 121.00 L782.50 121.00 L781.90 119.70 L781.30 121.00 L781.00 121.00 L781.00 121.00 L779.00 121.00Z" fill="#ffa500"/>
<path d="M810.00 116.00 L810.30 116.00 L810.90 117.30 L811.50 116.00 L812.00 116.00 L812.00 116.00 L814.00 116.00 L814.00 116.00 L814.30 116.00 L814.90 117.30 L815.50 116.00 L816.00 116.00 L816.00 116.00 L818.00 116.00 L818.00 116.00 L818.30 116.00 L818.90 117.30 L819.50 116.00 L820.00 116.00 L820.00 121.00 L818.00 121.00 L818.00 121.00 L817.50 121.00 L816.90 119.70 L816.30 121.00 L816.00 121.00 L816.00 121.00 L814.00 121.00 L814.00 121.00 L813.50 121.00 L812.90 119.70 L812.30 121.00 L812.00 121.00 L812.00 121.00 L810.00 121.00Z" fill="#ffa500"/>
<path d="M820.00 118.50 L821.24 120.35 L823.71 116.65 L826.19 120.35 L828.66 116.65 L831.14 120.35 L833.61 116.65 L836.09 120.35 L838.56 116.65 L841.04 120.35 L843.51 116.65 L845.99 120.35 L848.46 116.65 L850.94 120.35 L853.41 116.65 L855.89 120.35 L856.00 118.50" fill="none" stroke="#ffa500" stroke-width="1.3" stroke-linejoin="round"/>
<path d="M874.00 116.00 L874.30 116.00 L874.90 117.30 L875.50 116.00 L876.00 116.00 L876.00 116.00 L878.00 116.00 L878.00 116.00 L878.30 116.00 L878.90 117.30 L879.50 116.00 L880.00 116.00 L880.00 116.00 L882.00 116.00 L882.00 116.00 L882.30 116.00 L882.90 117.30 L883.50 116.00 L884.00 116.00 L884.00 116.00 L886.00 116.00 L886.00 116.00 L886.30 116.00 L886.90 117.30 L887.50 116.00 L888.00 116.00 L888.00 116.00 L890.00 116.00 L890.00 116.00 L890.30 116.00 L890.90 117.30 L891.00 116.00 L891.00 116.00 L891.00 121.00 L890.00 121.00 L890.00 121.00 L889.50 121.00 L888.90 119.70 L888.30 121.00 L888.00 121.00 L888.00 121.00 L886.00 121.00 L886.00 121.00 L885.50 121.00 L884.90 119.70 L884.30 121.00 L884.00 121.00 L884.00 121.00 L882.00 121.00 L882.00 121.00 L881.50 121.00 L880.90 119.70 L880.30 121.00 L880.00 121.00 L880.00 121.00 L878.00 121.00 L878.00 121.00 L877.50 121.00 L876.90 119.70 L876.30 121.00 L876.00 121.00 L876.00 121.00 L874.00 121.00Z" fill="#ffa500"/>
<path d="M902.00 118.50 L903.24 116.65 L905.71 120.35 L908.19 116.65 L910.66 120.35 L913.14 116.65 L915.61 120.35 L918.09 116.65 L920.56 120.35 L923.04 116.65 L925.51 120.35 L927.99 116.65 L930.46 120.35 L932.94 116.65 L935.41 120.35 L937.89 116.65 L940.36 120.35 L942.84 116.65 L944.00 118.50" fill="none" stroke="#ffa500" stroke-width="1.3" stroke-linejoin="round"/>
<g shape-rendering="crispEdges" fill="#ffff00">
<rect x="240" y="245" width="49" height="1"/>
<rect x="288" y="188" width="1" height="63"/>
<rect x="482" y="223" width="1" height="74"/>
<rect x="535" y="243.0" width="7" height="5.0"/>
<rect x="555" y="243.0" width="8" height="5.0"/>
<rect x="577" y="243.0" width="8" height="5.0"/>
<rect x="642" y="243.0" width="10" height="5.0"/>
<rect x="722" y="243.0" width="13" height="5.0"/>
<rect x="772" y="243.0" width="7" height="5.0"/>
<rect x="800" y="243.0" width="10" height="5.0"/>
<rect x="856" y="243.0" width="18" height="5.0"/>
<rect x="891" y="243.0" width="11" height="5.0"/>
<rect x="944" y="243.0" width="25" height="5.0"/>
</g>
<path d="M289.00 243.00 L289.30 243.00 L289.90 244.30 L290.50 243.00 L291.00 243.00 L291.00 243.00 L293.00 243.00 L293.00 248.00 L292.50 248.00 L291.90 246.70 L291.30 248.00 L291.00 248.00 L291.00 248.00 L289.00 248.00Z" fill="#ffff00"/>
<path d="M293.00 245.50 L294.24 243.50 L296.71 247.50 L299.19 243.50 L301.66 247.50 L304.14 243.50 L306.61 247.50 L309.09 243.50 L311.56 247.50 L314.04 243.50 L316.51 247.50 L318.99 243.50 L321.46 247.50 L323.94 243.50 L326.41 247.50 L328.89 243.50 L331.36 247.50 L333.84 243.50 L336.31 247.50 L338.79 243.50 L341.26 247.50 L343.74 243.50 L346.21 247.50 L348.69 243.50 L351.16 247.50 L353.64 243.50 L356.11 247.50 L358.59 243.50 L361.06 247.50 L363.54 243.50 L366.01 247.50 L368.49 243.50 L370.96 247.50 L373.44 243.50 L375.91 247.50 L378.39 243.50 L380.86 247.50 L383.34 243.50 L385.81 247.50 L388.29 243.50 L390.76 247.50 L393.24 243.50 L395.71 247.50 L398.19 243.50 L400.66 247.50 L403.14 243.50 L405.61 247.50 L408.09 243.50 L410.56 247.50 L413.04 243.50 L415.51 247.50 L417.99 243.50 L420.46 247.50 L422.94 243.50 L425.41 247.50 L427.89 243.50 L430.36 247.50 L432.84 243.50 L435.31 247.50 L437.79 243.50 L440.26 247.50 L442.74 243.50 L445.21 247.50 L447.69 243.50 L450.16 247.50 L452.64 243.50 L455.11 247.50 L457.59 243.50 L460.06 247.50 L462.54 243.50 L465.01 247.50 L467.49 243.50 L469.96 247.50 L472.44 243.50 L474.91 247.50 L477.39 243.50 L479.86 247.50 L482.34 243.50 L483.00 245.50" fill="none" stroke="#ffff00" stroke-width="1.3" stroke-linejoin="round"/>
<path d="M483.00 243.00 L483.30 243.00 L483.90 244.30 L484.50 243.00 L485.00 243.00 L485.00 243.00 L487.00 243.00 L487.00 243.00 L487.30 243.00 L487.90 244.30 L488.50 243.00 L489.00 243.00 L489.00 248.00 L487.00 248.00 L487.00 248.00 L486.50 248.00 L485.90 246.70 L485.30 248.00 L485.00 248.00 L485.00 248.00 L483.00 248.00Z" fill="#ffff00"/>
<path d="M489.00 245.50 L490.24 247.35 L492.71 243.65 L495.19 247.35 L497.66 243.65 L500.14 247.35 L502.61 243.65 L505.09 247.35 L507.56 243.65 L510.04 247.35 L512.51 243.65 L514.99 247.35 L517.46 243.65 L519.94 247.35 L522.41 243.65 L524.89 247.35 L527.36 243.65 L529.84 247.35 L532.31 243.65 L534.79 247.35 L535.00 245.50" fill="none" stroke="#ffff00" stroke-width="1.3" stroke-linejoin="round"/>
<path d="M542.00 243.00 L542.30 243.00 L542.90 244.30 L543.50 243.00 L544.00 243.00 L544.00 243.00 L546.00 243.00 L546.00 243.00 L546.30 243.00 L546.90 244.30 L547.50 243.00 L548.00 243.00 L548.00 243.00 L550.00 243.00 L550.00 243.00 L550.30 243.00 L550.90 244.30 L551.50 243.00 L552.00 243.00 L552.00 243.00 L554.00 243.00 L554.00 243.00 L554.30 243.00 L554.90 244.30 L555.00 243.00 L555.00 243.00 L555.00 248.00 L554.00 248.00 L554.00 248.00 L553.50 248.00 L552.90 246.70 L552.30 248.00 L552.00 248.00 L552.00 248.00 L550.00 248.00 L550.00 248.00 L549.50 248.00 L548.90 246.70 L548.30 248.00 L548.00 248.00 L548.00 248.00 L546.00 248.00 L546.00 248.00 L545.50 248.00 L544.90 246.70 L544.30 248.00 L544.00 248.00 L544.00 248.00 L542.00 248.00Z" fill="#ffff00"/>
<path d="M563.00 243.00 L563.30 243.00 L563.90 244.30 L564.50 243.00 L565.00 243.00 L565.00 243.00 L567.00 243.00 L567.00 243.00 L567.30 243.00 L567.90 244.30 L568.50 243.00 L569.00 243.00 L569.00 243.00 L571.00 243.00 L571.00 243.00 L571.30 243.00 L571.90 244.30 L572.50 243.00 L573.00 243.00 L573.00 243.00 L575.00 243.00 L575.00 243.00 L575.30 243.00 L575.90 244.30 L576.50 243.00 L577.00 243.00 L577.00 248.00 L575.00 248.00 L575.00 248.00 L574.50 248.00 L573.90 246.70 L573.30 248.00 L573.00 248.00 L573.00 248.00 L571.00 248.00 L571.00 248.00 L570.50 248.00 L569.90 246.70 L569.30 248.00 L569.00 248.00 L569.00 248.00 L567.00 248.00 L567.00 248.00 L566.50 248.00 L565.90 246.70 L565.30 248.00 L565.00 248.00 L565.00 248.00 L563.00 248.00Z" fill="#ffff00"/>
<path d="M585.00 245.50 L586.24 243.65 L588.71 247.35 L591.19 243.65 L593.66 247.35 L596.14 243.65 L598.61 247.35 L601.09 243.65 L603.56 247.35 L606.04 243.65 L608.51 247.35 L610.99 243.65 L613.46 247.35 L615.94 243.65 L618.41 247.35 L620.89 243.65 L623.36 247.35 L625.84 243.65 L628.31 247.35 L630.79 243.65 L633.26 247.35 L635.74 243.65 L638.21 247.35 L640.69 243.65 L642.00 247.35 L642.00 245.50" fill="none" stroke="#ffff00" stroke-width="1.3" stroke-linejoin="round"/>
<path d="M652.00 243.00 L652.30 243.00 L652.90 244.30 L653.50 243.00 L654.00 243.00 L654.00 243.00 L656.00 243.00 L656.00 243.00 L656.30 243.00 L656.90 244.30 L657.50 243.00 L658.00 243.00 L658.00 243.00 L660.00 243.00 L660.00 243.00 L660.30 243.00 L660.90 244.30 L661.00 243.00 L661.00 243.00 L661.00 248.00 L660.00 248.00 L660.00 248.00 L659.50 248.00 L658.90 246.70 L658.30 248.00 L658.00 248.00 L658.00 248.00 L656.00 248.00 L656.00 248.00 L655.50 248.00 L654.90 246.70 L654.30 248.00 L654.00 248.00 L654.00 248.00 L652.00 248.00Z" fill="#ffff00"/>
<path d="M661.00 245.50 L662.24 243.65 L664.71 247.35 L667.19 243.65 L669.66 247.35 L672.14 243.65 L674.61 247.35 L677.09 243.65 L679.56 247.35 L682.04 243.65 L684.51 247.35 L686.99 243.65 L689.46 247.35 L691.94 243.65 L692.00 245.50" fill="none" stroke="#ffff00" stroke-width="1.3" stroke-linejoin="round"/>
<path d="M692.00 243.00 L692.30 243.00 L692.90 244.30 L693.50 243.00 L694.00 243.00 L694.00 243.00 L696.00 243.00 L696.00 243.00 L696.30 243.00 L696.90 244.30 L697.50 243.00 L698.00 243.00 L698.00 243.00 L700.00 243.00 L700.00 243.00 L700.30 243.00 L700.90 244.30 L701.50 243.00 L702.00 243.00 L702.00 243.00 L704.00 243.00 L704.00 243.00 L704.30 243.00 L704.90 244.30 L705.50 243.00 L706.00 243.00 L706.00 243.00 L708.00 243.00 L708.00 243.00 L708.30 243.00 L708.90 244.30 L709.50 243.00 L710.00 243.00 L710.00 243.00 L712.00 243.00 L712.00 243.00 L712.30 243.00 L712.90 244.30 L713.50 243.00 L714.00 243.00 L714.00 243.00 L716.00 243.00 L716.00 243.00 L716.30 243.00 L716.90 244.30 L717.50 243.00 L718.00 243.00 L718.00 243.00 L720.00 243.00 L720.00 243.00 L720.30 243.00 L720.90 244.30 L721.50 243.00 L722.00 243.00 L722.00 248.00 L720.00 248.00 L720.00 248.00 L719.50 248.00 L718.90 246.70 L718.30 248.00 L718.00 248.00 L718.00 248.00 L716.00 248.00 L716.00 248.00 L715.50 248.00 L714.90 246.70 L714.30 248.00 L714.00 248.00 L714.00 248.00 L712.00 248.00 L712.00 248.00 L711.50 248.00 L710.90 246.70 L710.30 248.00 L710.00 248.00 L710.00 248.00 L708.00 248.00 L708.00 248.00 L707.50 248.00 L706.90 246.70 L706.30 248.00 L706.00 248.00 L706.00 248.00 L704.00 248.00 L704.00 248.00 L703.50 248.00 L702.90 246.70 L702.30 248.00 L702.00 248.00 L702.00 248.00 L700.00 248.00 L700.00 248.00 L699.50 248.00 L698.90 246.70 L698.30 248.00 L698.00 248.00 L698.00 248.00 L696.00 248.00 L696.00 248.00 L695.50 248.00 L694.90 246.70 L694.30 248.00 L694.00 248.00 L694.00 248.00 L692.00 248.00Z" fill="#ffff00"/>
<path d="M735.00 243.00 L735.30 243.00 L735.90 244.30 L736.50 243.00 L737.00 243.00 L737.00 243.00 L739.00 243.00 L739.00 243.00 L739.30 243.00 L739.90 244.30 L740.50 243.00 L741.00 243.00 L741.00 243.00 L743.00 243.00 L743.00 243.00 L743.30 243.00 L743.90 244.30 L744.50 243.00 L745.00 243.00 L745.00 243.00 L747.00 243.00 L747.00 243.00 L747.30 243.00 L747.90 244.30 L748.00 243.00 L748.00 243.00 L748.00 248.00 L747.00 248.00 L747.00 248.00 L746.50 248.00 L745.90 246.70 L745.30 248.00 L745.00 248.00 L745.00 248.00 L743.00 248.00 L743.00 248.00 L742.50 248.00 L741.90 246.70 L741.30 248.00 L741.00 248.00 L741.00 248.00 L739.00 248.00 L739.00 248.00 L738.50 248.00 L737.90 246.70 L737.30 248.00 L737.00 248.00 L737.00 248.00 L735.00 248.00Z" fill="#ffff00"/>
<path d="M748.00 245.50 L749.24 247.35 L751.71 243.65 L754.19 247.35 L756.66 243.65 L759.14 247.35 L761.61 243.65 L764.09 247.35 L766.56 243.65 L769.04 247.35 L771.51 243.65 L772.00 245.50" fill="none" stroke="#ffff00" stroke-width="1.3" stroke-linejoin="round"/>
<path d="M779.00 243.00 L779.30 243.00 L779.90 244.30 L780.50 243.00 L781.00 243.00 L781.00 243.00 L783.00 243.00 L783.00 243.00 L783.30 243.00 L783.90 244.30 L784.50 243.00 L785.00 243.00 L785.00 243.00 L787.00 243.00 L787.00 243.00 L787.30 243.00 L787.90 244.30 L788.50 243.00 L789.00 243.00 L789.00 243.00 L791.00 243.00 L791.00 243.00 L791.30 243.00 L791.90 244.30 L792.50 243.00 L793.00 243.00 L793.00 243.00 L795.00 243.00 L795.00 243.00 L795.30 243.00 L795.90 244.30 L796.50 243.00 L797.00 243.00 L797.00 243.00 L799.00 243.00 L799.00 243.00 L799.30 243.00 L799.90 244.30 L800.00 243.00 L800.00 243.00 L800.00 248.00 L799.00 248.00 L799.00 248.00 L798.50 248.00 L797.90 246.70 L797.30 248.00 L797.00 248.00 L797.00 248.00 L795.00 248.00 L795.00 248.00 L794.50 248.00 L793.90 246.70 L793.30 248.00 L793.00 248.00 L793.00 248.00 L791.00 248.00 L791.00 248.00 L790.50 248.00 L789.90 246.70 L789.30 248.00 L789.00 248.00 L789.00 248.00 L787.00 248.00 L787.00 248.00 L786.50 248.00 L785.90 246.70 L785.30 248.00 L785.00 248.00 L785.00 248.00 L783.00 248.00 L783.00 248.00 L782.50 248.00 L781.90 246.70 L781.30 248.00 L781.00 248.00 L781.00 248.00 L779.00 248.00Z" fill="#ffff00"/>
<path d="M810.00 243.00 L810.30 243.00 L810.90 244.30 L811.50 243.00 L812.00 243.00 L812.00 243.00 L814.00 243.00 L814.00 243.00 L814.30 243.00 L814.90 244.30 L815.50 243.00 L816.00 243.00 L816.00 243.00 L818.00 243.00 L818.00 243.00 L818.30 243.00 L818.90 244.30 L819.50 243.00 L820.00 243.00 L820.00 248.00 L818.00 248.00 L818.00 248.00 L817.50 248.00 L816.90 246.70 L816.30 248.00 L816.00 248.00 L816.00 248.00 L814.00 248.00 L814.00 248.00 L813.50 248.00 L812.90 246.70 L812.30 248.00 L812.00 248.00 L812.00 248.00 L810.00 248.00Z" fill="#ffff00"/>
<path d="M820.00 245.50 L821.24 247.35 L823.71 243.65 L826.19 247.35 L828.66 243.65 L831.14 247.35 L833.61 243.65 L836.09 247.35 L838.56 243.65 L841.04 247.35 L843.51 243.65 L845.99 247.35 L848.46 243.65 L850.94 247.35 L853.41 243.65 L855.89 247.35 L856.00 245.50" fill="none" stroke="#ffff00" stroke-width="1.3" stroke-linejoin="round"/>
<path d="M874.00 243.00 L874.30 243.00 L874.90 244.30 L875.50 243.00 L876.00 243.00 L876.00 243.00 L878.00 243.00 L878.00 243.00 L878.30 243.00 L878.90 244.30 L879.50 243.00 L880.00 243.00 L880.00 243.00 L882.00 243.00 L882.00 243.00 L882.30 243.00 L882.90 244.30 L883.50 243.00 L884.00 243.00 L884.00 243.00 L886.00 243.00 L886.00 243.00 L886.30 243.00 L886.90 244.30 L887.50 243.00 L888.00 243.00 L888.00 243.00 L890.00 243.00 L890.00 243.00 L890.30 243.00 L890.90 244.30 L891.00 243.00 L891.00 243.00 L891.00 248.00 L890.00 248.00 L890.00 248.00 L889.50 248.00 L888.90 246.70 L888.30 248.00 L888.00 248.00 L888.00 248.00 L886.00 248.00 L886.00 248.00 L885.50 248.00 L884.90 246.70 L884.30 248.00 L884.00 248.00 L884.00 248.00 L882.00 248.00 L882.00 248.00 L881.50 248.00 L880.90 246.70 L880.30 248.00 L880.00 248.00 L880.00 248.00 L878.00 248.00 L878.00 248.00 L877.50 248.00 L876.90 246.70 L876.30 248.00 L876.00 248.00 L876.00 248.00 L874.00 248.00Z" fill="#ffff00"/>
<path d="M902.00 245.50 L903.24 243.65 L905.71 247.35 L908.19 243.65 L910.66 247.35 L913.14 243.65 L915.61 247.35 L918.09 243.65 L920.56 247.35 L923.04 243.65 L925.51 247.35 L927.99 243.65 L930.46 247.35 L932.94 243.65 L935.41 247.35 L937.89 243.65 L940.36 247.35 L942.84 243.65 L944.00 245.50" fill="none" stroke="#ffff00" stroke-width="1.3" stroke-linejoin="round"/>
<g shape-rendering="crispEdges" fill="#80c83c">
<rect x="240" y="369" width="49" height="1"/>
<rect x="288" y="363" width="1" height="64"/>
<rect x="482" y="318" width="1" height="74"/>
<rect x="535" y="368.0" width="7" height="4.0"/>
<rect x="555" y="368.0" width="8" height="4.0"/>
<rect x="577" y="368.0" width="8" height="4.0"/>
<rect x="642" y="368.0" width="10" height="4.0"/>
<rect x="722" y="368.0" width="13" height="4.0"/>
<rect x="772" y="368.0" width="7" height="4.0"/>
<rect x="800" y="368.0" width="10" height="4.0"/>
<rect x="856" y="368.0" width="18" height="4.0"/>
<rect x="891" y="368.0" width="11" height="4.0"/>
<rect x="944" y="368.0" width="25" height="4.0"/>
</g>
<path d="M289.00 368.00 L289.30 368.00 L289.90 369.30 L290.50 368.00 L291.00 368.00 L291.00 368.00 L293.00 368.00 L293.00 372.00 L292.50 372.00 L291.90 370.70 L291.30 372.00 L291.00 372.00 L291.00 372.00 L289.00 372.00Z" fill="#80c83c"/>
<path d="M293.00 369.50 L294.24 367.80 L296.71 371.20 L299.19 367.80 L301.66 371.20 L304.14 367.80 L306.61 371.20 L309.09 367.80 L311.56 371.20 L314.04 367.80 L316.51 371.20 L318.99 367.80 L321.46 371.20 L323.94 367.80 L326.41 371.20 L328.89 367.80 L331.36 371.20 L333.84 367.80 L336.31 371.20 L338.79 367.80 L341.26 371.20 L343.74 367.80 L346.21 371.20 L348.69 367.80 L351.16 371.20 L353.64 367.80 L356.11 371.20 L358.59 367.80 L361.06 371.20 L363.54 367.80 L366.01 371.20 L368.49 367.80 L370.96 371.20 L373.44 367.80 L375.91 371.20 L378.39 367.80 L380.86 371.20 L383.34 367.80 L385.81 371.20 L388.29 367.80 L390.76 371.20 L393.24 367.80 L395.71 371.20 L398.19 367.80 L400.66 371.20 L403.14 367.80 L405.61 371.20 L408.09 367.80 L410.56 371.20 L413.04 367.80 L415.51 371.20 L417.99 367.80 L420.46 371.20 L422.94 367.80 L425.41 371.20 L427.89 367.80 L430.36 371.20 L432.84 367.80 L435.31 371.20 L437.79 367.80 L440.26 371.20 L442.74 367.80 L445.21 371.20 L447.69 367.80 L450.16 371.20 L452.64 367.80 L455.11 371.20 L457.59 367.80 L460.06 371.20 L462.54 367.80 L465.01 371.20 L467.49 367.80 L469.96 371.20 L472.44 367.80 L474.91 371.20 L477.39 367.80 L479.86 371.20 L482.34 367.80 L483.00 369.50" fill="none" stroke="#80c83c" stroke-width="1.3" stroke-linejoin="round"/>
<path d="M483.00 368.00 L483.30 368.00 L483.90 369.30 L484.50 368.00 L485.00 368.00 L485.00 368.00 L487.00 368.00 L487.00 368.00 L487.30 368.00 L487.90 369.30 L488.50 368.00 L489.00 368.00 L489.00 372.00 L487.00 372.00 L487.00 372.00 L486.50 372.00 L485.90 370.70 L485.30 372.00 L485.00 372.00 L485.00 372.00 L483.00 372.00Z" fill="#80c83c"/>
<path d="M489.00 369.50 L490.24 370.80 L492.71 368.20 L495.19 370.80 L497.66 368.20 L500.14 370.80 L502.61 368.20 L505.09 370.80 L507.56 368.20 L510.04 370.80 L512.51 368.20 L514.99 370.80 L517.46 368.20 L519.94 370.80 L522.41 368.20 L524.89 370.80 L527.36 368.20 L529.84 370.80 L532.31 368.20 L534.79 370.80 L535.00 369.50" fill="none" stroke="#80c83c" stroke-width="1.3" stroke-linejoin="round"/>
<path d="M542.00 368.00 L542.30 368.00 L542.90 369.30 L543.50 368.00 L544.00 368.00 L544.00 368.00 L546.00 368.00 L546.00 368.00 L546.30 368.00 L546.90 369.30 L547.50 368.00 L548.00 368.00 L548.00 368.00 L550.00 368.00 L550.00 368.00 L550.30 368.00 L550.90 369.30 L551.50 368.00 L552.00 368.00 L552.00 368.00 L554.00 368.00 L554.00 368.00 L554.30 368.00 L554.90 369.30 L555.00 368.00 L555.00 368.00 L555.00 372.00 L554.00 372.00 L554.00 372.00 L553.50 372.00 L552.90 370.70 L552.30 372.00 L552.00 372.00 L552.00 372.00 L550.00 372.00 L550.00 372.00 L549.50 372.00 L548.90 370.70 L548.30 372.00 L548.00 372.00 L548.00 372.00 L546.00 372.00 L546.00 372.00 L545.50 372.00 L544.90 370.70 L544.30 372.00 L544.00 372.00 L544.00 372.00 L542.00 372.00Z" fill="#80c83c"/>
<path d="M563.00 368.00 L563.30 368.00 L563.90 369.30 L564.50 368.00 L565.00 368.00 L565.00 368.00 L567.00 368.00 L567.00 368.00 L567.30 368.00 L567.90 369.30 L568.50 368.00 L569.00 368.00 L569.00 368.00 L571.00 368.00 L571.00 368.00 L571.30 368.00 L571.90 369.30 L572.50 368.00 L573.00 368.00 L573.00 368.00 L575.00 368.00 L575.00 368.00 L575.30 368.00 L575.90 369.30 L576.50 368.00 L577.00 368.00 L577.00 372.00 L575.00 372.00 L575.00 372.00 L574.50 372.00 L573.90 370.70 L573.30 372.00 L573.00 372.00 L573.00 372.00 L571.00 372.00 L571.00 372.00 L570.50 372.00 L569.90 370.70 L569.30 372.00 L569.00 372.00 L569.00 372.00 L567.00 372.00 L567.00 372.00 L566.50 372.00 L565.90 370.70 L565.30 372.00 L565.00 372.00 L565.00 372.00 L563.00 372.00Z" fill="#80c83c"/>
<path d="M585.00 369.50 L586.24 368.20 L588.71 370.80 L591.19 368.20 L593.66 370.80 L596.14 368.20 L598.61 370.80 L601.09 368.20 L603.56 370.80 L606.04 368.20 L608.51 370.80 L610.99 368.20 L613.46 370.80 L615.94 368.20 L618.41 370.80 L620.89 368.20 L623.36 370.80 L625.84 368.20 L628.31 370.80 L630.79 368.20 L633.26 370.80 L635.74 368.20 L638.21 370.80 L640.69 368.20 L642.00 370.80 L642.00 369.50" fill="none" stroke="#80c83c" stroke-width="1.3" stroke-linejoin="round"/>
<path d="M652.00 368.00 L652.30 368.00 L652.90 369.30 L653.50 368.00 L654.00 368.00 L654.00 368.00 L656.00 368.00 L656.00 368.00 L656.30 368.00 L656.90 369.30 L657.50 368.00 L658.00 368.00 L658.00 368.00 L660.00 368.00 L660.00 368.00 L660.30 368.00 L660.90 369.30 L661.00 368.00 L661.00 368.00 L661.00 372.00 L660.00 372.00 L660.00 372.00 L659.50 372.00 L658.90 370.70 L658.30 372.00 L658.00 372.00 L658.00 372.00 L656.00 372.00 L656.00 372.00 L655.50 372.00 L654.90 370.70 L654.30 372.00 L654.00 372.00 L654.00 372.00 L652.00 372.00Z" fill="#80c83c"/>
<path d="M661.00 369.50 L662.24 368.20 L664.71 370.80 L667.19 368.20 L669.66 370.80 L672.14 368.20 L674.61 370.80 L677.09 368.20 L679.56 370.80 L682.04 368.20 L684.51 370.80 L686.99 368.20 L689.46 370.80 L691.94 368.20 L692.00 369.50" fill="none" stroke="#80c83c" stroke-width="1.3" stroke-linejoin="round"/>
<path d="M692.00 368.00 L692.30 368.00 L692.90 369.30 L693.50 368.00 L694.00 368.00 L694.00 368.00 L696.00 368.00 L696.00 368.00 L696.30 368.00 L696.90 369.30 L697.50 368.00 L698.00 368.00 L698.00 368.00 L700.00 368.00 L700.00 368.00 L700.30 368.00 L700.90 369.30 L701.50 368.00 L702.00 368.00 L702.00 368.00 L704.00 368.00 L704.00 368.00 L704.30 368.00 L704.90 369.30 L705.50 368.00 L706.00 368.00 L706.00 368.00 L708.00 368.00 L708.00 368.00 L708.30 368.00 L708.90 369.30 L709.50 368.00 L710.00 368.00 L710.00 368.00 L712.00 368.00 L712.00 368.00 L712.30 368.00 L712.90 369.30 L713.50 368.00 L714.00 368.00 L714.00 368.00 L716.00 368.00 L716.00 368.00 L716.30 368.00 L716.90 369.30 L717.50 368.00 L718.00 368.00 L718.00 368.00 L720.00 368.00 L720.00 368.00 L720.30 368.00 L720.90 369.30 L721.50 368.00 L722.00 368.00 L722.00 372.00 L720.00 372.00 L720.00 372.00 L719.50 372.00 L718.90 370.70 L718.30 372.00 L718.00 372.00 L718.00 372.00 L716.00 372.00 L716.00 372.00 L715.50 372.00 L714.90 370.70 L714.30 372.00 L714.00 372.00 L714.00 372.00 L712.00 372.00 L712.00 372.00 L711.50 372.00 L710.90 370.70 L710.30 372.00 L710.00 372.00 L710.00 372.00 L708.00 372.00 L708.00 372.00 L707.50 372.00 L706.90 370.70 L706.30 372.00 L706.00 372.00 L706.00 372.00 L704.00 372.00 L704.00 372.00 L703.50 372.00 L702.90 370.70 L702.30 372.00 L702.00 372.00 L702.00 372.00 L700.00 372.00 L700.00 372.00 L699.50 372.00 L698.90 370.70 L698.30 372.00 L698.00 372.00 L698.00 372.00 L696.00 372.00 L696.00 372.00 L695.50 372.00 L694.90 370.70 L694.30 372.00 L694.00 372.00 L694.00 372.00 L692.00 372.00Z" fill="#80c83c"/>
<path d="M735.00 368.00 L735.30 368.00 L735.90 369.30 L736.50 368.00 L737.00 368.00 L737.00 368.00 L739.00 368.00 L739.00 368.00 L739.30 368.00 L739.90 369.30 L740.50 368.00 L741.00 368.00 L741.00 368.00 L743.00 368.00 L743.00 368.00 L743.30 368.00 L743.90 369.30 L744.50 368.00 L745.00 368.00 L745.00 368.00 L747.00 368.00 L747.00 368.00 L747.30 368.00 L747.90 369.30 L748.00 368.00 L748.00 368.00 L748.00 372.00 L747.00 372.00 L747.00 372.00 L746.50 372.00 L745.90 370.70 L745.30 372.00 L745.00 372.00 L745.00 372.00 L743.00 372.00 L743.00 372.00 L742.50 372.00 L741.90 370.70 L741.30 372.00 L741.00 372.00 L741.00 372.00 L739.00 372.00 L739.00 372.00 L738.50 372.00 L737.90 370.70 L737.30 372.00 L737.00 372.00 L737.00 372.00 L735.00 372.00Z" fill="#80c83c"/>
<path d="M748.00 369.50 L749.24 370.80 L751.71 368.20 L754.19 370.80 L756.66 368.20 L759.14 370.80 L761.61 368.20 L764.09 370.80 L766.56 368.20 L769.04 370.80 L771.51 368.20 L772.00 369.50" fill="none" stroke="#80c83c" stroke-width="1.3" stroke-linejoin="round"/>
<path d="M779.00 368.00 L779.30 368.00 L779.90 369.30 L780.50 368.00 L781.00 368.00 L781.00 368.00 L783.00 368.00 L783.00 368.00 L783.30 368.00 L783.90 369.30 L784.50 368.00 L785.00 368.00 L785.00 368.00 L787.00 368.00 L787.00 368.00 L787.30 368.00 L787.90 369.30 L788.50 368.00 L789.00 368.00 L789.00 368.00 L791.00 368.00 L791.00 368.00 L791.30 368.00 L791.90 369.30 L792.50 368.00 L793.00 368.00 L793.00 368.00 L795.00 368.00 L795.00 368.00 L795.30 368.00 L795.90 369.30 L796.50 368.00 L797.00 368.00 L797.00 368.00 L799.00 368.00 L799.00 368.00 L799.30 368.00 L799.90 369.30 L800.00 368.00 L800.00 368.00 L800.00 372.00 L799.00 372.00 L799.00 372.00 L798.50 372.00 L797.90 370.70 L797.30 372.00 L797.00 372.00 L797.00 372.00 L795.00 372.00 L795.00 372.00 L794.50 372.00 L793.90 370.70 L793.30 372.00 L793.00 372.00 L793.00 372.00 L791.00 372.00 L791.00 372.00 L790.50 372.00 L789.90 370.70 L789.30 372.00 L789.00 372.00 L789.00 372.00 L787.00 372.00 L787.00 372.00 L786.50 372.00 L785.90 370.70 L785.30 372.00 L785.00 372.00 L785.00 372.00 L783.00 372.00 L783.00 372.00 L782.50 372.00 L781.90 370.70 L781.30 372.00 L781.00 372.00 L781.00 372.00 L779.00 372.00Z" fill="#80c83c"/>
<path d="M810.00 368.00 L810.30 368.00 L810.90 369.30 L811.50 368.00 L812.00 368.00 L812.00 368.00 L814.00 368.00 L814.00 368.00 L814.30 368.00 L814.90 369.30 L815.50 368.00 L816.00 368.00 L816.00 368.00 L818.00 368.00 L818.00 368.00 L818.30 368.00 L818.90 369.30 L819.50 368.00 L820.00 368.00 L820.00 372.00 L818.00 372.00 L818.00 372.00 L817.50 372.00 L816.90 370.70 L816.30 372.00 L816.00 372.00 L816.00 372.00 L814.00 372.00 L814.00 372.00 L813.50 372.00 L812.90 370.70 L812.30 372.00 L812.00 372.00 L812.00 372.00 L810.00 372.00Z" fill="#80c83c"/>
<path d="M820.00 369.50 L821.24 370.80 L823.71 368.20 L826.19 370.80 L828.66 368.20 L831.14 370.80 L833.61 368.20 L836.09 370.80 L838.56 368.20 L841.04 370.80 L843.51 368.20 L845.99 370.80 L848.46 368.20 L850.94 370.80 L853.41 368.20 L855.89 370.80 L856.00 369.50" fill="none" stroke="#80c83c" stroke-width="1.3" stroke-linejoin="round"/>
<path d="M874.00 368.00 L874.30 368.00 L874.90 369.30 L875.50 368.00 L876.00 368.00 L876.00 368.00 L878.00 368.00 L878.00 368.00 L878.30 368.00 L878.90 369.30 L879.50 368.00 L880.00 368.00 L880.00 368.00 L882.00 368.00 L882.00 368.00 L882.30 368.00 L882.90 369.30 L883.50 368.00 L884.00 368.00 L884.00 368.00 L886.00 368.00 L886.00 368.00 L886.30 368.00 L886.90 369.30 L887.50 368.00 L888.00 368.00 L888.00 368.00 L890.00 368.00 L890.00 368.00 L890.30 368.00 L890.90 369.30 L891.00 368.00 L891.00 368.00 L891.00 372.00 L890.00 372.00 L890.00 372.00 L889.50 372.00 L888.90 370.70 L888.30 372.00 L888.00 372.00 L888.00 372.00 L886.00 372.00 L886.00 372.00 L885.50 372.00 L884.90 370.70 L884.30 372.00 L884.00 372.00 L884.00 372.00 L882.00 372.00 L882.00 372.00 L881.50 372.00 L880.90 370.70 L880.30 372.00 L880.00 372.00 L880.00 372.00 L878.00 372.00 L878.00 372.00 L877.50 372.00 L876.90 370.70 L876.30 372.00 L876.00 372.00 L876.00 372.00 L874.00 372.00Z" fill="#80c83c"/>
<path d="M902.00 369.50 L903.24 368.20 L905.71 370.80 L908.19 368.20 L910.66 370.80 L913.14 368.20 L915.61 370.80 L918.09 368.20 L920.56 370.80 L923.04 368.20 L925.51 370.80 L927.99 368.20 L930.46 370.80 L932.94 368.20 L935.41 370.80 L937.89 368.20 L940.36 370.80 L942.84 368.20 L944.00 369.50" fill="none" stroke="#80c83c" stroke-width="1.3" stroke-linejoin="round"/>
<g shape-rendering="crispEdges" fill="#00d2ff">
<rect x="240" y="502" width="49" height="1"/>
<rect x="288" y="445" width="1" height="63"/>
<rect x="482" y="480" width="1" height="74"/>
<rect x="535" y="500.0" width="7" height="4.0"/>
<rect x="555" y="500.0" width="8" height="4.0"/>
<rect x="577" y="500.0" width="8" height="4.0"/>
<rect x="642" y="500.0" width="10" height="4.0"/>
<rect x="722" y="500.0" width="13" height="4.0"/>
<rect x="772" y="500.0" width="7" height="4.0"/>
<rect x="800" y="500.0" width="10" height="4.0"/>
<rect x="856" y="500.0" width="18" height="4.0"/>
<rect x="891" y="500.0" width="11" height="4.0"/>
<rect x="944" y="500.0" width="25" height="4.0"/>
</g>
<path d="M289.00 500.00 L289.30 500.00 L289.90 501.30 L290.50 500.00 L291.00 500.00 L291.00 500.00 L293.00 500.00 L293.00 504.00 L292.50 504.00 L291.90 502.70 L291.30 504.00 L291.00 504.00 L291.00 504.00 L289.00 504.00Z" fill="#00d2ff"/>
<path d="M293.00 502.50 L294.24 500.80 L296.71 504.20 L299.19 500.80 L301.66 504.20 L304.14 500.80 L306.61 504.20 L309.09 500.80 L311.56 504.20 L314.04 500.80 L316.51 504.20 L318.99 500.80 L321.46 504.20 L323.94 500.80 L326.41 504.20 L328.89 500.80 L331.36 504.20 L333.84 500.80 L336.31 504.20 L338.79 500.80 L341.26 504.20 L343.74 500.80 L346.21 504.20 L348.69 500.80 L351.16 504.20 L353.64 500.80 L356.11 504.20 L358.59 500.80 L361.06 504.20 L363.54 500.80 L366.01 504.20 L368.49 500.80 L370.96 504.20 L373.44 500.80 L375.91 504.20 L378.39 500.80 L380.86 504.20 L383.34 500.80 L385.81 504.20 L388.29 500.80 L390.76 504.20 L393.24 500.80 L395.71 504.20 L398.19 500.80 L400.66 504.20 L403.14 500.80 L405.61 504.20 L408.09 500.80 L410.56 504.20 L413.04 500.80 L415.51 504.20 L417.99 500.80 L420.46 504.20 L422.94 500.80 L425.41 504.20 L427.89 500.80 L430.36 504.20 L432.84 500.80 L435.31 504.20 L437.79 500.80 L440.26 504.20 L442.74 500.80 L445.21 504.20 L447.69 500.80 L450.16 504.20 L452.64 500.80 L455.11 504.20 L457.59 500.80 L460.06 504.20 L462.54 500.80 L465.01 504.20 L467.49 500.80 L469.96 504.20 L472.44 500.80 L474.91 504.20 L477.39 500.80 L479.86 504.20 L482.34 500.80 L483.00 502.50" fill="none" stroke="#00d2ff" stroke-width="1.3" stroke-linejoin="round"/>
<path d="M483.00 500.00 L483.30 500.00 L483.90 501.30 L484.50 500.00 L485.00 500.00 L485.00 500.00 L487.00 500.00 L487.00 500.00 L487.30 500.00 L487.90 501.30 L488.50 500.00 L489.00 500.00 L489.00 504.00 L487.00 504.00 L487.00 504.00 L486.50 504.00 L485.90 502.70 L485.30 504.00 L485.00 504.00 L485.00 504.00 L483.00 504.00Z" fill="#00d2ff"/>
<path d="M489.00 502.50 L490.24 503.80 L492.71 501.20 L495.19 503.80 L497.66 501.20 L500.14 503.80 L502.61 501.20 L505.09 503.80 L507.56 501.20 L510.04 503.80 L512.51 501.20 L514.99 503.80 L517.46 501.20 L519.94 503.80 L522.41 501.20 L524.89 503.80 L527.36 501.20 L529.84 503.80 L532.31 501.20 L534.79 503.80 L535.00 502.50" fill="none" stroke="#00d2ff" stroke-width="1.3" stroke-linejoin="round"/>
<path d="M542.00 500.00 L542.30 500.00 L542.90 501.30 L543.50 500.00 L544.00 500.00 L544.00 500.00 L546.00 500.00 L546.00 500.00 L546.30 500.00 L546.90 501.30 L547.50 500.00 L548.00 500.00 L548.00 500.00 L550.00 500.00 L550.00 500.00 L550.30 500.00 L550.90 501.30 L551.50 500.00 L552.00 500.00 L552.00 500.00 L554.00 500.00 L554.00 500.00 L554.30 500.00 L554.90 501.30 L555.00 500.00 L555.00 500.00 L555.00 504.00 L554.00 504.00 L554.00 504.00 L553.50 504.00 L552.90 502.70 L552.30 504.00 L552.00 504.00 L552.00 504.00 L550.00 504.00 L550.00 504.00 L549.50 504.00 L548.90 502.70 L548.30 504.00 L548.00 504.00 L548.00 504.00 L546.00 504.00 L546.00 504.00 L545.50 504.00 L544.90 502.70 L544.30 504.00 L544.00 504.00 L544.00 504.00 L542.00 504.00Z" fill="#00d2ff"/>
<path d="M563.00 500.00 L563.30 500.00 L563.90 501.30 L564.50 500.00 L565.00 500.00 L565.00 500.00 L567.00 500.00 L567.00 500.00 L567.30 500.00 L567.90 501.30 L568.50 500.00 L569.00 500.00 L569.00 500.00 L571.00 500.00 L571.00 500.00 L571.30 500.00 L571.90 501.30 L572.50 500.00 L573.00 500.00 L573.00 500.00 L575.00 500.00 L575.00 500.00 L575.30 500.00 L575.90 501.30 L576.50 500.00 L577.00 500.00 L577.00 504.00 L575.00 504.00 L575.00 504.00 L574.50 504.00 L573.90 502.70 L573.30 504.00 L573.00 504.00 L573.00 504.00 L571.00 504.00 L571.00 504.00 L570.50 504.00 L569.90 502.70 L569.30 504.00 L569.00 504.00 L569.00 504.00 L567.00 504.00 L567.00 504.00 L566.50 504.00 L565.90 502.70 L565.30 504.00 L565.00 504.00 L565.00 504.00 L563.00 504.00Z" fill="#00d2ff"/>
<path d="M585.00 502.50 L586.24 501.20 L588.71 503.80 L591.19 501.20 L593.66 503.80 L596.14 501.20 L598.61 503.80 L601.09 501.20 L603.56 503.80 L606.04 501.20 L608.51 503.80 L610.99 501.20 L613.46 503.80 L615.94 501.20 L618.41 503.80 L620.89 501.20 L623.36 503.80 L625.84 501.20 L628.31 503.80 L630.79 501.20 L633.26 503.80 L635.74 501.20 L638.21 503.80 L640.69 501.20 L642.00 503.80 L642.00 502.50" fill="none" stroke="#00d2ff" stroke-width="1.3" stroke-linejoin="round"/>
<path d="M652.00 500.00 L652.30 500.00 L652.90 501.30 L653.50 500.00 L654.00 500.00 L654.00 500.00 L656.00 500.00 L656.00 500.00 L656.30 500.00 L656.90 501.30 L657.50 500.00 L658.00 500.00 L658.00 500.00 L660.00 500.00 L660.00 500.00 L660.30 500.00 L660.90 501.30 L661.00 500.00 L661.00 500.00 L661.00 504.00 L660.00 504.00 L660.00 504.00 L659.50 504.00 L658.90 502.70 L658.30 504.00 L658.00 504.00 L658.00 504.00 L656.00 504.00 L656.00 504.00 L655.50 504.00 L654.90 502.70 L654.30 504.00 L654.00 504.00 L654.00 504.00 L652.00 504.00Z" fill="#00d2ff"/>
<path d="M661.00 502.50 L662.24 501.20 L664.71 503.80 L667.19 501.20 L669.66 503.80 L672.14 501.20 L674.61 503.80 L677.09 501.20 L679.56 503.80 L682.04 501.20 L684.51 503.80 L686.99 501.20 L689.46 503.80 L691.94 501.20 L692.00 502.50" fill="none" stroke="#00d2ff" stroke-width="1.3" stroke-linejoin="round"/>
<path d="M692.00 500.00 L692.30 500.00 L692.90 501.30 L693.50 500.00 L694.00 500.00 L694.00 500.00 L696.00 500.00 L696.00 500.00 L696.30 500.00 L696.90 501.30 L697.50 500.00 L698.00 500.00 L698.00 500.00 L700.00 500.00 L700.00 500.00 L700.30 500.00 L700.90 501.30 L701.50 500.00 L702.00 500.00 L702.00 500.00 L704.00 500.00 L704.00 500.00 L704.30 500.00 L704.90 501.30 L705.50 500.00 L706.00 500.00 L706.00 500.00 L708.00 500.00 L708.00 500.00 L708.30 500.00 L708.90 501.30 L709.50 500.00 L710.00 500.00 L710.00 500.00 L712.00 500.00 L712.00 500.00 L712.30 500.00 L712.90 501.30 L713.50 500.00 L714.00 500.00 L714.00 500.00 L716.00 500.00 L716.00 500.00 L716.30 500.00 L716.90 501.30 L717.50 500.00 L718.00 500.00 L718.00 500.00 L720.00 500.00 L720.00 500.00 L720.30 500.00 L720.90 501.30 L721.50 500.00 L722.00 500.00 L722.00 504.00 L720.00 504.00 L720.00 504.00 L719.50 504.00 L718.90 502.70 L718.30 504.00 L718.00 504.00 L718.00 504.00 L716.00 504.00 L716.00 504.00 L715.50 504.00 L714.90 502.70 L714.30 504.00 L714.00 504.00 L714.00 504.00 L712.00 504.00 L712.00 504.00 L711.50 504.00 L710.90 502.70 L710.30 504.00 L710.00 504.00 L710.00 504.00 L708.00 504.00 L708.00 504.00 L707.50 504.00 L706.90 502.70 L706.30 504.00 L706.00 504.00 L706.00 504.00 L704.00 504.00 L704.00 504.00 L703.50 504.00 L702.90 502.70 L702.30 504.00 L702.00 504.00 L702.00 504.00 L700.00 504.00 L700.00 504.00 L699.50 504.00 L698.90 502.70 L698.30 504.00 L698.00 504.00 L698.00 504.00 L696.00 504.00 L696.00 504.00 L695.50 504.00 L694.90 502.70 L694.30 504.00 L694.00 504.00 L694.00 504.00 L692.00 504.00Z" fill="#00d2ff"/>
<path d="M735.00 500.00 L735.30 500.00 L735.90 501.30 L736.50 500.00 L737.00 500.00 L737.00 500.00 L739.00 500.00 L739.00 500.00 L739.30 500.00 L739.90 501.30 L740.50 500.00 L741.00 500.00 L741.00 500.00 L743.00 500.00 L743.00 500.00 L743.30 500.00 L743.90 501.30 L744.50 500.00 L745.00 500.00 L745.00 500.00 L747.00 500.00 L747.00 500.00 L747.30 500.00 L747.90 501.30 L748.00 500.00 L748.00 500.00 L748.00 504.00 L747.00 504.00 L747.00 504.00 L746.50 504.00 L745.90 502.70 L745.30 504.00 L745.00 504.00 L745.00 504.00 L743.00 504.00 L743.00 504.00 L742.50 504.00 L741.90 502.70 L741.30 504.00 L741.00 504.00 L741.00 504.00 L739.00 504.00 L739.00 504.00 L738.50 504.00 L737.90 502.70 L737.30 504.00 L737.00 504.00 L737.00 504.00 L735.00 504.00Z" fill="#00d2ff"/>
<path d="M748.00 502.50 L749.24 503.80 L751.71 501.20 L754.19 503.80 L756.66 501.20 L759.14 503.80 L761.61 501.20 L764.09 503.80 L766.56 501.20 L769.04 503.80 L771.51 501.20 L772.00 502.50" fill="none" stroke="#00d2ff" stroke-width="1.3" stroke-linejoin="round"/>
<path d="M779.00 500.00 L779.30 500.00 L779.90 501.30 L780.50 500.00 L781.00 500.00 L781.00 500.00 L783.00 500.00 L783.00 500.00 L783.30 500.00 L783.90 501.30 L784.50 500.00 L785.00 500.00 L785.00 500.00 L787.00 500.00 L787.00 500.00 L787.30 500.00 L787.90 501.30 L788.50 500.00 L789.00 500.00 L789.00 500.00 L791.00 500.00 L791.00 500.00 L791.30 500.00 L791.90 501.30 L792.50 500.00 L793.00 500.00 L793.00 500.00 L795.00 500.00 L795.00 500.00 L795.30 500.00 L795.90 501.30 L796.50 500.00 L797.00 500.00 L797.00 500.00 L799.00 500.00 L799.00 500.00 L799.30 500.00 L799.90 501.30 L800.00 500.00 L800.00 500.00 L800.00 504.00 L799.00 504.00 L799.00 504.00 L798.50 504.00 L797.90 502.70 L797.30 504.00 L797.00 504.00 L797.00 504.00 L795.00 504.00 L795.00 504.00 L794.50 504.00 L793.90 502.70 L793.30 504.00 L793.00 504.00 L793.00 504.00 L791.00 504.00 L791.00 504.00 L790.50 504.00 L789.90 502.70 L789.30 504.00 L789.00 504.00 L789.00 504.00 L787.00 504.00 L787.00 504.00 L786.50 504.00 L785.90 502.70 L785.30 504.00 L785.00 504.00 L785.00 504.00 L783.00 504.00 L783.00 504.00 L782.50 504.00 L781.90 502.70 L781.30 504.00 L781.00 504.00 L781.00 504.00 L779.00 504.00Z" fill="#00d2ff"/>
<path d="M810.00 500.00 L810.30 500.00 L810.90 501.30 L811.50 500.00 L812.00 500.00 L812.00 500.00 L814.00 500.00 L814.00 500.00 L814.30 500.00 L814.90 501.30 L815.50 500.00 L816.00 500.00 L816.00 500.00 L818.00 500.00 L818.00 500.00 L818.30 500.00 L818.90 501.30 L819.50 500.00 L820.00 500.00 L820.00 504.00 L818.00 504.00 L818.00 504.00 L817.50 504.00 L816.90 502.70 L816.30 504.00 L816.00 504.00 L816.00 504.00 L814.00 504.00 L814.00 504.00 L813.50 504.00 L812.90 502.70 L812.30 504.00 L812.00 504.00 L812.00 504.00 L810.00 504.00Z" fill="#00d2ff"/>
<path d="M820.00 502.50 L821.24 503.80 L823.71 501.20 L826.19 503.80 L828.66 501.20 L831.14 503.80 L833.61 501.20 L836.09 503.80 L838.56 501.20 L841.04 503.80 L843.51 501.20 L845.99 503.80 L848.46 501.20 L850.94 503.80 L853.41 501.20 L855.89 503.80 L856.00 502.50" fill="none" stroke="#00d2ff" stroke-width="1.3" stroke-linejoin="round"/>
<path d="M874.00 500.00 L874.30 500.00 L874.90 501.30 L875.50 500.00 L876.00 500.00 L876.00 500.00 L878.00 500.00 L878.00 500.00 L878.30 500.00 L878.90 501.30 L879.50 500.00 L880.00 500.00 L880.00 500.00 L882.00 500.00 L882.00 500.00 L882.30 500.00 L882.90 501.30 L883.50 500.00 L884.00 500.00 L884.00 500.00 L886.00 500.00 L886.00 500.00 L886.30 500.00 L886.90 501.30 L887.50 500.00 L888.00 500.00 L888.00 500.00 L890.00 500.00 L890.00 500.00 L890.30 500.00 L890.90 501.30 L891.00 500.00 L891.00 500.00 L891.00 504.00 L890.00 504.00 L890.00 504.00 L889.50 504.00 L888.90 502.70 L888.30 504.00 L888.00 504.00 L888.00 504.00 L886.00 504.00 L886.00 504.00 L885.50 504.00 L884.90 502.70 L884.30 504.00 L884.00 504.00 L884.00 504.00 L882.00 504.00 L882.00 504.00 L881.50 504.00 L880.90 502.70 L880.30 504.00 L880.00 504.00 L880.00 504.00 L878.00 504.00 L878.00 504.00 L877.50 504.00 L876.90 502.70 L876.30 504.00 L876.00 504.00 L876.00 504.00 L874.00 504.00Z" fill="#00d2ff"/>
<path d="M902.00 502.50 L903.24 501.20 L905.71 503.80 L908.19 501.20 L910.66 503.80 L913.14 501.20 L915.61 503.80 L918.09 501.20 L920.56 503.80 L923.04 501.20 L925.51 503.80 L927.99 501.20 L930.46 503.80 L932.94 501.20 L935.41 503.80 L937.89 501.20 L940.36 503.80 L942.84 501.20 L944.00 502.50" fill="none" stroke="#00d2ff" stroke-width="1.3" stroke-linejoin="round"/>
<rect x="240.5" y="164.5" width="15" height="11" fill="#030303" stroke="#969696" stroke-width="1" shape-rendering="crispEdges"/>
<path d="M246 166.0 L251.5 170.0 L246 174.0 Z" fill="#9c9c9c"/>
<rect x="240.5" y="291.5" width="15" height="11" fill="#030303" stroke="#969696" stroke-width="1" shape-rendering="crispEdges"/>
<path d="M246 293.0 L251.5 297.0 L246 301.0 Z" fill="#9c9c9c"/>
<rect x="240.5" y="418.5" width="15" height="11" fill="#030303" stroke="#969696" stroke-width="1" shape-rendering="crispEdges"/>
<path d="M246 420.0 L251.5 424.0 L246 428.0 Z" fill="#9c9c9c"/>
<rect x="240.5" y="545.5" width="15" height="11" fill="#030303" stroke="#969696" stroke-width="1" shape-rendering="crispEdges"/>
<path d="M246 547.0 L251.5 551.0 L246 555.0 Z" fill="#9c9c9c"/>
</svg>

<div class="yl" style="top:54px">70.0</div>
<div class="yl" style="top:102px">10.0</div>
<div class="yl" style="top:135px">-30.0</div>
<div class="yl" style="top:168px">-70.0</div>
<div class="ima" style="top:118.9px">I (mA)</div>
<div class="yl" style="top:181px">70.0</div>
<div class="yl" style="top:229px">10.0</div>
<div class="yl" style="top:262px">-30.0</div>
<div class="yl" style="top:295px">-70.0</div>
<div class="ima" style="top:245.9px">I (mA)</div>
<div class="yl" style="top:308px">500.0</div>
<div class="yl" style="top:378px">-150.0</div>
<div class="yl" style="top:422px">-550.0</div>
<div class="ima" style="top:372.9px">I (mA)</div>
<div class="yl" style="top:435px">550.0</div>
<div class="yl" style="top:505px">-100.0</div>
<div class="yl" style="top:549px">-500.0</div>
<div class="ima" style="top:499.9px">I (mA)</div>
<div class="xl" style="left:220.5px">0.0</div>
<div class="xl" style="left:269.0px">1.0</div>
<div class="xl" style="left:317.6px">2.0</div>
<div class="xl" style="left:366.1px">3.0</div>
<div class="xl" style="left:414.6px">4.0</div>
<div class="xl" style="left:463.2px">5.0</div>
<div class="xl" style="left:511.7px">6.0</div>
<div class="xl" style="left:560.2px">7.0</div>
<div class="xl" style="left:608.8px">8.0</div>
<div class="xl" style="left:657.3px">9.0</div>
<div class="xl" style="left:705.5px;letter-spacing:0.35px">10.0</div>
<div class="xl" style="left:754.1px;letter-spacing:0.35px">11.0</div>
<div class="xl" style="left:802.6px;letter-spacing:0.35px">12.0</div>
<div class="xl" style="left:851.1px;letter-spacing:0.35px">13.0</div>
<div class="xl" style="left:899.7px;letter-spacing:0.35px">14.0</div>
<div class="xl" style="left:948.2px;letter-spacing:0.35px">15.0</div>
<div id="tl">time (us)</div>
<div id="wm">CSDN @Riching5</div>

<!-- overview slider -->
<div class="btn" style="left:240px"></div>
<div class="btn" style="left:955px;border-color:#5c5c5c #8c8c8c #6c6c6c #4c4c4c;background:linear-gradient(90deg,#4c4c4c,#5e5e5e 50%,#7e7e7e)"></div>
<div id="sl">
<div id="sli"></div>
<div class="grip" style="left:5.2px"></div><div class="grip" style="left:7.4px"></div>
<div class="grip" style="left:695.7px"></div><div class="grip" style="left:697.9px"></div>
</div>
<svg width="993" height="627" viewBox="0 0 993 627">
<path d="M243 39.1L247.9 36V42.2Z" fill="#e00000"/>
<path d="M962.1 39.1L957 36V42.2Z" fill="#e00000"/>
<g shape-rendering="crispEdges" fill="#ffa500">
<rect x="265" y="39" width="44" height="1"/>
<rect x="309" y="29" width="1" height="13"/>
<rect x="490" y="35" width="1" height="15"/>
<rect x="310" y="40" width="2" height="1"/>
<rect x="312" y="39" width="2" height="1"/>
<rect x="314" y="40" width="3" height="1"/>
<rect x="317" y="39" width="1" height="1"/>
<rect x="318" y="40" width="4" height="1"/>
<rect x="322" y="39" width="1" height="1"/>
<rect x="323" y="40" width="3" height="1"/>
<rect x="326" y="39" width="2" height="1"/>
<rect x="328" y="40" width="3" height="1"/>
<rect x="331" y="39" width="2" height="1"/>
<rect x="333" y="40" width="3" height="1"/>
<rect x="336" y="39" width="1" height="1"/>
<rect x="337" y="40" width="3" height="1"/>
<rect x="340" y="39" width="2" height="1"/>
<rect x="342" y="40" width="3" height="1"/>
<rect x="345" y="39" width="2" height="1"/>
<rect x="347" y="40" width="3" height="1"/>
<rect x="350" y="39" width="1" height="1"/>
<rect x="351" y="40" width="4" height="1"/>
<rect x="355" y="39" width="1" height="1"/>
<rect x="356" y="40" width="3" height="1"/>
<rect x="359" y="39" width="2" height="1"/>
<rect x="361" y="40" width="3" height="1"/>
<rect x="364" y="39" width="1" height="1"/>
<rect x="365" y="40" width="4" height="1"/>
<rect x="369" y="39" width="1" height="1"/>
<rect x="370" y="40" width="3" height="1"/>
<rect x="373" y="39" width="2" height="1"/>
<rect x="375" y="40" width="3" height="1"/>
<rect x="378" y="39" width="2" height="1"/>
<rect x="380" y="40" width="3" height="1"/>
<rect x="383" y="39" width="1" height="1"/>
<rect x="384" y="40" width="3" height="1"/>
<rect x="387" y="39" width="2" height="1"/>
<rect x="389" y="40" width="3" height="1"/>
<rect x="392" y="39" width="2" height="1"/>
<rect x="394" y="40" width="3" height="1"/>
<rect x="397" y="39" width="1" height="1"/>
<rect x="398" y="40" width="4" height="1"/>
<rect x="402" y="39" width="1" height="1"/>
<rect x="403" y="40" width="3" height="1"/>
<rect x="406" y="39" width="2" height="1"/>
<rect x="408" y="40" width="3" height="1"/>
<rect x="411" y="39" width="1" height="1"/>
<rect x="412" y="40" width="4" height="1"/>
<rect x="416" y="39" width="1" height="1"/>
<rect x="417" y="40" width="3" height="1"/>
<rect x="420" y="39" width="2" height="1"/>
<rect x="422" y="40" width="3" height="1"/>
<rect x="425" y="39" width="2" height="1"/>
<rect x="427" y="40" width="3" height="1"/>
<rect x="430" y="39" width="1" height="1"/>
<rect x="431" y="40" width="3" height="1"/>
<rect x="434" y="39" width="2" height="1"/>
<rect x="436" y="40" width="3" height="1"/>
<rect x="439" y="39" width="2" height="1"/>
<rect x="441" y="40" width="3" height="1"/>
<rect x="444" y="39" width="1" height="1"/>
<rect x="445" y="40" width="4" height="1"/>
<rect x="449" y="39" width="1" height="1"/>
<rect x="450" y="40" width="3" height="1"/>
<rect x="453" y="39" width="2" height="1"/>
<rect x="455" y="40" width="3" height="1"/>
<rect x="458" y="39" width="1" height="1"/>
<rect x="459" y="40" width="4" height="1"/>
<rect x="463" y="39" width="1" height="1"/>
<rect x="464" y="40" width="3" height="1"/>
<rect x="467" y="39" width="2" height="1"/>
<rect x="469" y="40" width="3" height="1"/>
<rect x="472" y="39" width="2" height="1"/>
<rect x="474" y="40" width="3" height="1"/>
<rect x="477" y="39" width="1" height="1"/>
<rect x="478" y="40" width="3" height="1"/>
<rect x="481" y="39" width="2" height="1"/>
<rect x="483" y="40" width="3" height="1"/>
<rect x="486" y="39" width="2" height="1"/>
<rect x="488" y="40" width="3" height="1"/>
<rect x="491" y="39" width="1" height="1"/>
<rect x="492" y="40" width="4" height="1"/>
<rect x="496" y="39" width="1" height="1"/>
<rect x="497" y="40" width="3" height="1"/>
<rect x="500" y="39" width="2" height="1"/>
<rect x="502" y="40" width="3" height="1"/>
<rect x="505" y="39" width="1" height="1"/>
<rect x="506" y="40" width="4" height="1"/>
<rect x="510" y="39" width="1" height="1"/>
<rect x="511" y="40" width="3" height="1"/>
<rect x="514" y="39" width="2" height="1"/>
<rect x="516" y="40" width="3" height="1"/>
<rect x="519" y="39" width="2" height="1"/>
<rect x="521" y="40" width="3" height="1"/>
<rect x="524" y="39" width="1" height="1"/>
<rect x="525" y="40" width="3" height="1"/>
<rect x="528" y="39" width="2" height="1"/>
<rect x="530" y="40" width="3" height="1"/>
<rect x="533" y="39" width="2" height="1"/>
<rect x="535" y="40" width="3" height="1"/>
<rect x="538" y="39" width="1" height="1"/>
<rect x="539" y="40" width="4" height="1"/>
<rect x="543" y="39" width="1" height="1"/>
<rect x="544" y="40" width="3" height="1"/>
<rect x="547" y="39" width="2" height="1"/>
<rect x="549" y="40" width="3" height="1"/>
<rect x="552" y="39" width="1" height="1"/>
<rect x="553" y="40" width="4" height="1"/>
<rect x="557" y="39" width="1" height="1"/>
<rect x="558" y="40" width="3" height="1"/>
<rect x="561" y="39" width="2" height="1"/>
<rect x="563" y="40" width="3" height="1"/>
<rect x="566" y="39" width="2" height="1"/>
<rect x="568" y="40" width="3" height="1"/>
<rect x="571" y="39" width="1" height="1"/>
<rect x="572" y="40" width="3" height="1"/>
<rect x="575" y="39" width="2" height="1"/>
<rect x="577" y="40" width="3" height="1"/>
<rect x="580" y="39" width="2" height="1"/>
<rect x="582" y="40" width="3" height="1"/>
<rect x="585" y="39" width="1" height="1"/>
<rect x="586" y="40" width="4" height="1"/>
<rect x="590" y="39" width="1" height="1"/>
<rect x="591" y="40" width="3" height="1"/>
<rect x="594" y="39" width="2" height="1"/>
<rect x="596" y="40" width="3" height="1"/>
<rect x="599" y="39" width="1" height="1"/>
<rect x="600" y="40" width="4" height="1"/>
<rect x="604" y="39" width="1" height="1"/>
<rect x="605" y="40" width="3" height="1"/>
<rect x="608" y="39" width="2" height="1"/>
<rect x="610" y="40" width="3" height="1"/>
<rect x="613" y="39" width="2" height="1"/>
<rect x="615" y="40" width="3" height="1"/>
<rect x="618" y="39" width="1" height="1"/>
<rect x="619" y="40" width="3" height="1"/>
<rect x="622" y="39" width="2" height="1"/>
<rect x="624" y="40" width="3" height="1"/>
<rect x="627" y="39" width="2" height="1"/>
<rect x="629" y="40" width="3" height="1"/>
<rect x="632" y="39" width="1" height="1"/>
<rect x="633" y="40" width="4" height="1"/>
<rect x="637" y="39" width="1" height="1"/>
<rect x="638" y="40" width="3" height="1"/>
<rect x="641" y="39" width="2" height="1"/>
<rect x="643" y="40" width="3" height="1"/>
<rect x="646" y="39" width="1" height="1"/>
<rect x="647" y="40" width="4" height="1"/>
<rect x="651" y="39" width="1" height="1"/>
<rect x="652" y="40" width="3" height="1"/>
<rect x="655" y="39" width="2" height="1"/>
<rect x="657" y="40" width="3" height="1"/>
<rect x="660" y="39" width="2" height="1"/>
<rect x="662" y="40" width="3" height="1"/>
<rect x="665" y="39" width="1" height="1"/>
<rect x="666" y="40" width="3" height="1"/>
<rect x="669" y="39" width="2" height="1"/>
<rect x="671" y="40" width="3" height="1"/>
<rect x="674" y="39" width="2" height="1"/>
<rect x="676" y="40" width="3" height="1"/>
<rect x="679" y="39" width="1" height="1"/>
<rect x="680" y="40" width="4" height="1"/>
<rect x="684" y="39" width="1" height="1"/>
<rect x="685" y="40" width="3" height="1"/>
<rect x="688" y="39" width="2" height="1"/>
<rect x="690" y="40" width="3" height="1"/>
<rect x="693" y="39" width="1" height="1"/>
<rect x="694" y="40" width="4" height="1"/>
<rect x="698" y="39" width="1" height="1"/>
<rect x="699" y="40" width="3" height="1"/>
<rect x="702" y="39" width="2" height="1"/>
<rect x="704" y="40" width="3" height="1"/>
<rect x="707" y="39" width="2" height="1"/>
<rect x="709" y="40" width="3" height="1"/>
<rect x="712" y="39" width="1" height="1"/>
<rect x="713" y="40" width="3" height="1"/>
<rect x="716" y="39" width="2" height="1"/>
<rect x="718" y="40" width="3" height="1"/>
<rect x="721" y="39" width="2" height="1"/>
<rect x="723" y="40" width="3" height="1"/>
<rect x="726" y="39" width="1" height="1"/>
<rect x="727" y="40" width="4" height="1"/>
<rect x="731" y="39" width="1" height="1"/>
<rect x="732" y="40" width="3" height="1"/>
<rect x="735" y="39" width="2" height="1"/>
<rect x="737" y="40" width="3" height="1"/>
<rect x="740" y="39" width="1" height="1"/>
<rect x="741" y="40" width="4" height="1"/>
<rect x="745" y="39" width="1" height="1"/>
<rect x="746" y="40" width="3" height="1"/>
<rect x="749" y="39" width="2" height="1"/>
<rect x="751" y="40" width="3" height="1"/>
<rect x="754" y="39" width="2" height="1"/>
<rect x="756" y="40" width="3" height="1"/>
<rect x="759" y="39" width="1" height="1"/>
<rect x="760" y="40" width="3" height="1"/>
<rect x="763" y="39" width="2" height="1"/>
<rect x="765" y="40" width="3" height="1"/>
<rect x="768" y="39" width="2" height="1"/>
<rect x="770" y="40" width="3" height="1"/>
<rect x="773" y="39" width="1" height="1"/>
<rect x="774" y="40" width="4" height="1"/>
<rect x="778" y="39" width="1" height="1"/>
<rect x="779" y="40" width="3" height="1"/>
<rect x="782" y="39" width="2" height="1"/>
<rect x="784" y="40" width="3" height="1"/>
<rect x="787" y="39" width="1" height="1"/>
<rect x="788" y="40" width="4" height="1"/>
<rect x="792" y="39" width="1" height="1"/>
<rect x="793" y="40" width="3" height="1"/>
<rect x="796" y="39" width="2" height="1"/>
<rect x="798" y="40" width="3" height="1"/>
<rect x="801" y="39" width="2" height="1"/>
<rect x="803" y="40" width="3" height="1"/>
<rect x="806" y="39" width="1" height="1"/>
<rect x="807" y="40" width="3" height="1"/>
<rect x="810" y="39" width="2" height="1"/>
<rect x="812" y="40" width="3" height="1"/>
<rect x="815" y="39" width="2" height="1"/>
<rect x="817" y="40" width="3" height="1"/>
<rect x="820" y="39" width="1" height="1"/>
<rect x="821" y="40" width="4" height="1"/>
<rect x="825" y="39" width="1" height="1"/>
<rect x="826" y="40" width="3" height="1"/>
<rect x="829" y="39" width="2" height="1"/>
<rect x="831" y="40" width="3" height="1"/>
<rect x="834" y="39" width="1" height="1"/>
<rect x="835" y="40" width="4" height="1"/>
<rect x="839" y="39" width="1" height="1"/>
<rect x="840" y="40" width="3" height="1"/>
<rect x="843" y="39" width="2" height="1"/>
<rect x="845" y="40" width="3" height="1"/>
<rect x="848" y="39" width="2" height="1"/>
<rect x="850" y="40" width="3" height="1"/>
<rect x="853" y="39" width="1" height="1"/>
<rect x="854" y="40" width="3" height="1"/>
<rect x="857" y="39" width="2" height="1"/>
<rect x="859" y="40" width="3" height="1"/>
<rect x="862" y="39" width="2" height="1"/>
<rect x="864" y="40" width="3" height="1"/>
<rect x="867" y="39" width="1" height="1"/>
<rect x="868" y="40" width="4" height="1"/>
<rect x="872" y="39" width="1" height="1"/>
<rect x="873" y="40" width="3" height="1"/>
<rect x="876" y="39" width="2" height="1"/>
<rect x="878" y="40" width="3" height="1"/>
<rect x="881" y="39" width="1" height="1"/>
<rect x="882" y="40" width="4" height="1"/>
<rect x="886" y="39" width="1" height="1"/>
<rect x="887" y="40" width="3" height="1"/>
<rect x="890" y="39" width="2" height="1"/>
<rect x="892" y="40" width="3" height="1"/>
<rect x="895" y="39" width="2" height="1"/>
<rect x="897" y="40" width="3" height="1"/>
<rect x="900" y="39" width="1" height="1"/>
<rect x="901" y="40" width="3" height="1"/>
<rect x="904" y="39" width="2" height="1"/>
<rect x="906" y="40" width="3" height="1"/>
<rect x="909" y="39" width="2" height="1"/>
<rect x="911" y="40" width="3" height="1"/>
<rect x="914" y="39" width="1" height="1"/>
<rect x="915" y="40" width="4" height="1"/>
<rect x="919" y="39" width="1" height="1"/>
<rect x="920" y="40" width="3" height="1"/>
<rect x="923" y="39" width="2" height="1"/>
<rect x="925" y="40" width="3" height="1"/>
<rect x="928" y="39" width="1" height="1"/>
<rect x="929" y="40" width="4" height="1"/>
<rect x="933" y="39" width="1" height="1"/>
<rect x="934" y="40" width="3" height="1"/>
<rect x="937" y="39" width="2" height="1"/>
<rect x="939" y="40" width="3" height="1"/>
<rect x="942" y="39" width="1" height="1"/>
</g>
</svg>
</div>
</body>
</html>
